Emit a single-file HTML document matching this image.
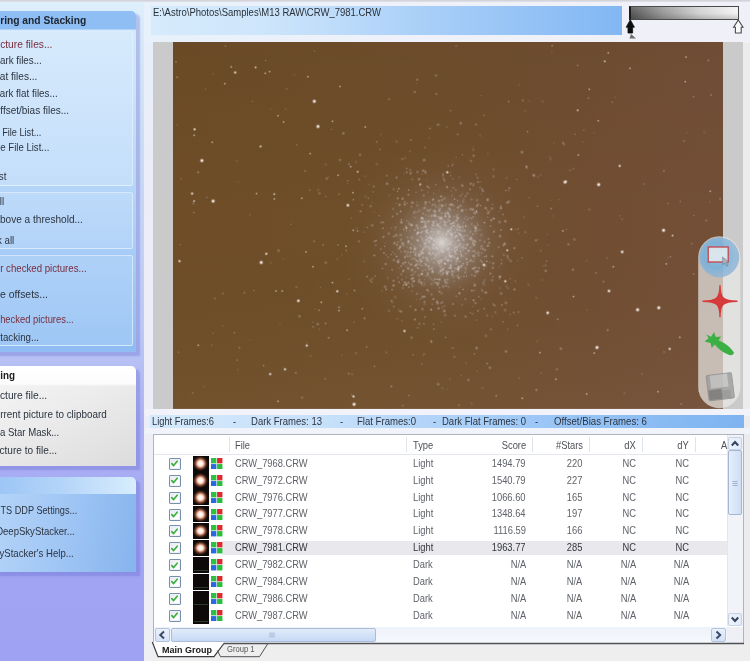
<!DOCTYPE html><html><head><meta charset="utf-8"><title>DeepSkyStacker</title><style>
*{margin:0;padding:0;box-sizing:border-box}
html,body{width:750px;height:661px;overflow:hidden}
body{position:relative;background:#ececee;font-family:"Liberation Sans",sans-serif}
.a{position:absolute}
.t{position:absolute;white-space:nowrap;line-height:14px;height:14px;filter:blur(0.4px)}
#side{left:0;top:0;width:144px;height:661px;background:linear-gradient(180deg,#deeffc 0px,#d8eafb 30px,#cbdcf7 140px,#bcc8f5 330px,#adb2f3 420px,#a1a4f2 560px,#9fa2f2 661px)}
#split{left:144px;top:0;width:9px;height:661px;background:linear-gradient(180deg,#e6f0fb 0,#ebecf7 200px,#eeeef5 661px)}
.box{position:absolute;left:-10px;width:146px;border-radius:5px 5px 0 0;overflow:hidden}
.sh{box-shadow:3.5px 3.5px 1.5px rgba(90,95,200,.3)}
.sub{position:absolute;left:-5px;width:138px;border:1.5px solid rgba(225,240,255,.75);border-radius:2px}
.sky{position:absolute}
.cb{position:absolute;left:168.8px;width:12px;height:12px;border:1.2px solid #7890ae;background:linear-gradient(135deg,#dfe6ea,#fff 70%);border-radius:1px;box-shadow:inset 0 0 0 1px #eef2f6}
.cb svg{position:absolute;left:-.7px;top:-.7px}
.th{position:absolute;left:192.7px;width:16px;height:16.1px;background:#0c0908}
.th.lt::after{content:"";position:absolute;left:.7px;top:.8px;width:14.6px;height:14.6px;border-radius:50%;background:radial-gradient(closest-side,#fff 0,#fff4ec 24%,#f4c8b4 42%,#b07058 58%,#5a3022 76%,rgba(30,14,10,0) 100%);filter:blur(.3px)}
.th.dk::after{content:"";position:absolute;left:1px;top:13.5px;width:14px;height:1px;background:#2c3a2c}
.rgb{position:absolute;left:211.4px;width:11px;height:11px;background:#fff}
.rgb i{position:absolute;width:5.2px;height:5.2px}
.rgb i:nth-child(1){left:0;top:0}.rgb i:nth-child(2){right:0;top:0}.rgb i:nth-child(3){left:0;bottom:0}.rgb i:nth-child(4){right:0;bottom:0}
</style></head><body>
<div class="a" id="side"></div><div class="a" id="split"></div>
<div class="box sh" style="top:11px;height:341px;background:linear-gradient(180deg,#8fbef4 0,#8fbef4 18px,#d3e8fb 19px,#cfe5fb 60px,#b4d5f8 180px,#a3c9f6 260px,#8ebcf3 341px)"></div>
<div class="sub" style="top:30.5px;height:155px;background:linear-gradient(180deg,#d6eafc,#c4defa)"></div>
<div class="sub" style="top:191.5px;height:57px;background:linear-gradient(180deg,#bddaf9,#b2d3f8)"></div>
<div class="sub" style="top:255px;height:91px;background:linear-gradient(180deg,#aed1f8,#9fc7f5)"></div>
<div class="box sh" style="top:366px;height:100px;background:linear-gradient(180deg,#ffffff 0,#fcfcfc 18px,rgba(255,255,255,0) 20px),linear-gradient(155deg,#f6f6f6 0,#ececec 45%,#dcdcdc 100%)"></div>
<div class="box sh" style="top:476.5px;height:95px;background:linear-gradient(100deg,#b6d5f9 0,#a3c8f5 45%,#86b4ee 100%)"></div>
<div class="box" style="top:476.5px;height:17.5px;background:linear-gradient(90deg,#9ac3f5 0,#b4d5f9 50%,#d8edfd 100%)"></div>
<div class="a" style="left:144px;top:0;width:606px;height:42.500px;background:linear-gradient(90deg,#e7f1fb 0,#eef1f9 40%,#f0f0f8 100%)"></div>
<div class="a" style="left:0;top:0;width:750px;height:2px;background:linear-gradient(180deg,#cfcfd4,#e2e3ea)"></div>
<div class="a" style="left:150.7px;top:6px;width:471.7px;height:29px;background:linear-gradient(90deg,#d6ebfc 0,#cde5fb 25%,#a7cef8 60%,#82b7f3 100%)"></div>
<div class="a" style="left:628.5px;top:6.3px;width:110.7px;height:13.3px;border:1px solid #4a4a4a;border-left:2px solid #1c1c1c;border-bottom:1.6px solid #4c4c4c;background:linear-gradient(180deg,rgba(255,255,255,.12) 0,rgba(255,255,255,0) 50%,rgba(0,0,0,.16) 100%),linear-gradient(90deg,#5a5a5a 0,#9a9a9a 30%,#d4d4d4 65%,#f4f4f4 100%)"></div>
<svg class="a" style="left:622px;top:18px" width="128" height="24" viewBox="0 0 128 24"><g filter="url(#sb2)"><path d="M8.3 1.800 L12.400 9.200 L10.600 9.200 L10.600 15 L6 15 L6 9.200 L4.200 9.200 Z" fill="#0c0c0c" stroke="#0c0c0c" stroke-width="0.800"/><path d="M9 16 L14 20.500 L7.500 20.500Z" fill="#555" opacity=".85"/><path d="M116.300 2 L121 9.200 L119.200 9.200 L119.200 15 L113.400 15 L113.400 9.200 L111.600 9.200 Z" fill="#fafafa" stroke="#4a4a4a" stroke-width="1.100"/></g><defs><filter id="sb2"><feGaussianBlur stdDeviation=".4"/></filter></defs></svg>
<div class="a" style="left:153px;top:41.7px;width:590px;height:366.9px;background:#cacaca"></div>
<svg class="sky" width="550.2" height="366.9" viewBox="0 0 550.2 366.9" style="left:172.7px;top:41.7px">
<defs>
<linearGradient id="bg" x1="0" y1="0" x2="1" y2="0"><stop offset="0" stop-color="#6e4d27"/><stop offset="0.45" stop-color="#6f4e2b"/><stop offset="0.75" stop-color="#714e32"/><stop offset="1" stop-color="#734f37"/></linearGradient>
<linearGradient id="bg2" x1="0" y1="0" x2="0" y2="1"><stop offset="0" stop-color="#000" stop-opacity=".035"/><stop offset="0.5" stop-color="#000" stop-opacity="0"/><stop offset="1" stop-color="#fff" stop-opacity=".03"/></linearGradient>
<radialGradient id="gl"><stop offset="0" stop-color="#d6d4d6" stop-opacity="0.85"/><stop offset="0.1" stop-color="#cccbd0" stop-opacity="0.66"/><stop offset="0.2" stop-color="#c4c4cc" stop-opacity="0.5"/><stop offset="0.35" stop-color="#bcbcc6" stop-opacity="0.26"/><stop offset="0.5" stop-color="#b6b4bc" stop-opacity="0.11"/><stop offset="0.7" stop-color="#b0a8a8" stop-opacity="0.035"/><stop offset="1" stop-color="#a89888" stop-opacity="0"/></radialGradient>
<radialGradient id="st"><stop offset="0" stop-color="#fff" stop-opacity="1"/><stop offset="0.35" stop-color="#f0e8e2" stop-opacity="0.75"/><stop offset="0.7" stop-color="#d8c8b8" stop-opacity="0.25"/><stop offset="1" stop-color="#c8b8a8" stop-opacity="0"/></radialGradient>
<radialGradient id="co"><stop offset="0" stop-color="#ece8e4" stop-opacity="0.75"/><stop offset="0.3" stop-color="#e0dad4" stop-opacity="0.45"/><stop offset="0.65" stop-color="#d0c8c0" stop-opacity="0.15"/><stop offset="1" stop-color="#c8c0b8" stop-opacity="0"/></radialGradient>
<filter id="blr" x="0" y="0" width="100%" height="100%"><feGaussianBlur stdDeviation="0.7"/></filter>
<radialGradient id="sf"><stop offset="0" stop-color="#e6e0e0" stop-opacity="0.9"/><stop offset="0.5" stop-color="#d6d0d0" stop-opacity="0.5"/><stop offset="1" stop-color="#c6c0c0" stop-opacity="0"/></radialGradient>
</defs>
<rect width="550.2" height="366.9" fill="url(#bg)"/><rect width="550.2" height="366.9" fill="url(#bg2)"/>
<circle cx="268.8" cy="200.6" r="100" fill="url(#gl)"/>
<circle cx="268.8" cy="200.6" r="16" fill="url(#co)" opacity=".7"/>
<g filter="url(#blr)">
<circle cx="285.9" cy="224.4" r="1.9" fill="url(#sf)" opacity="0.18"/>
<circle cx="240.1" cy="232.9" r="1.3" fill="url(#sf)" opacity="0.33"/>
<circle cx="258.7" cy="205.1" r="1.3" fill="url(#sf)" opacity="0.19"/>
<circle cx="285.2" cy="169.3" r="1.3" fill="url(#sf)" opacity="0.24"/>
<circle cx="317.4" cy="184.0" r="1.8" fill="url(#sf)" opacity="0.29"/>
<circle cx="276.3" cy="191.3" r="1.5" fill="url(#sf)" opacity="0.21"/>
<circle cx="262.5" cy="216.9" r="2.1" fill="url(#sf)" opacity="0.22"/>
<circle cx="238.6" cy="164.6" r="1.6" fill="url(#sf)" opacity="0.35"/>
<circle cx="281.3" cy="205.5" r="1.4" fill="url(#sf)" opacity="0.39"/>
<circle cx="254.9" cy="233.3" r="1.8" fill="url(#sf)" opacity="0.31"/>
<circle cx="276.5" cy="173.8" r="2.0" fill="url(#sf)" opacity="0.24"/>
<circle cx="223.0" cy="193.3" r="2.2" fill="url(#sf)" opacity="0.41"/>
<circle cx="295.8" cy="197.2" r="1.3" fill="url(#sf)" opacity="0.30"/>
<circle cx="308.5" cy="256.7" r="1.7" fill="url(#sf)" opacity="0.17"/>
<circle cx="273.9" cy="145.0" r="1.8" fill="url(#sf)" opacity="0.46"/>
<circle cx="259.1" cy="173.6" r="1.9" fill="url(#sf)" opacity="0.36"/>
<circle cx="288.8" cy="169.0" r="2.2" fill="url(#sf)" opacity="0.32"/>
<circle cx="320.2" cy="221.2" r="2.0" fill="url(#sf)" opacity="0.38"/>
<circle cx="250.9" cy="281.6" r="1.6" fill="url(#sf)" opacity="0.33"/>
<circle cx="259.9" cy="202.8" r="1.4" fill="url(#sf)" opacity="0.20"/>
<circle cx="270.3" cy="187.6" r="1.3" fill="url(#sf)" opacity="0.24"/>
<circle cx="291.8" cy="176.6" r="1.3" fill="url(#sf)" opacity="0.31"/>
<circle cx="301.7" cy="171.0" r="2.1" fill="url(#sf)" opacity="0.45"/>
<circle cx="245.8" cy="214.2" r="1.6" fill="url(#sf)" opacity="0.46"/>
<circle cx="277.5" cy="218.0" r="1.5" fill="url(#sf)" opacity="0.24"/>
<circle cx="235.4" cy="179.7" r="1.5" fill="url(#sf)" opacity="0.16"/>
<circle cx="245.0" cy="226.2" r="1.8" fill="url(#sf)" opacity="0.48"/>
<circle cx="210.5" cy="194.9" r="1.9" fill="url(#sf)" opacity="0.39"/>
<circle cx="279.0" cy="193.1" r="2.1" fill="url(#sf)" opacity="0.46"/>
<circle cx="208.8" cy="248.7" r="1.6" fill="url(#sf)" opacity="0.17"/>
<circle cx="316.9" cy="220.4" r="1.3" fill="url(#sf)" opacity="0.23"/>
<circle cx="258.0" cy="217.6" r="1.3" fill="url(#sf)" opacity="0.16"/>
<circle cx="284.5" cy="212.2" r="1.6" fill="url(#sf)" opacity="0.17"/>
<circle cx="192.4" cy="134.1" r="1.4" fill="url(#sf)" opacity="0.21"/>
<circle cx="248.7" cy="223.7" r="1.3" fill="url(#sf)" opacity="0.45"/>
<circle cx="230.9" cy="204.5" r="1.3" fill="url(#sf)" opacity="0.19"/>
<circle cx="266.0" cy="230.8" r="2.1" fill="url(#sf)" opacity="0.21"/>
<circle cx="277.6" cy="197.8" r="1.8" fill="url(#sf)" opacity="0.21"/>
<circle cx="311.9" cy="208.0" r="1.8" fill="url(#sf)" opacity="0.49"/>
<circle cx="236.8" cy="109.4" r="1.5" fill="url(#sf)" opacity="0.24"/>
<circle cx="271.6" cy="180.3" r="1.8" fill="url(#sf)" opacity="0.42"/>
<circle cx="273.8" cy="229.8" r="2.1" fill="url(#sf)" opacity="0.49"/>
<circle cx="300.7" cy="113.7" r="2.1" fill="url(#sf)" opacity="0.35"/>
<circle cx="245.1" cy="198.0" r="1.6" fill="url(#sf)" opacity="0.17"/>
<circle cx="267.0" cy="210.3" r="1.5" fill="url(#sf)" opacity="0.40"/>
<circle cx="302.7" cy="186.4" r="2.3" fill="url(#sf)" opacity="0.48"/>
<circle cx="274.6" cy="231.7" r="1.4" fill="url(#sf)" opacity="0.23"/>
<circle cx="252.7" cy="184.7" r="2.2" fill="url(#sf)" opacity="0.45"/>
<circle cx="246.5" cy="168.6" r="2.1" fill="url(#sf)" opacity="0.19"/>
<circle cx="315.1" cy="171.1" r="2.1" fill="url(#sf)" opacity="0.42"/>
<circle cx="285.7" cy="235.6" r="2.1" fill="url(#sf)" opacity="0.27"/>
<circle cx="345.2" cy="186.9" r="1.6" fill="url(#sf)" opacity="0.25"/>
<circle cx="243.4" cy="41.7" r="1.4" fill="url(#sf)" opacity="0.17"/>
<circle cx="284.9" cy="189.6" r="2.1" fill="url(#sf)" opacity="0.21"/>
<circle cx="352.4" cy="190.2" r="1.9" fill="url(#sf)" opacity="0.24"/>
<circle cx="298.9" cy="233.0" r="1.2" fill="url(#sf)" opacity="0.49"/>
<circle cx="215.8" cy="191.7" r="2.2" fill="url(#sf)" opacity="0.31"/>
<circle cx="314.9" cy="111.7" r="1.4" fill="url(#sf)" opacity="0.21"/>
<circle cx="270.4" cy="228.1" r="1.8" fill="url(#sf)" opacity="0.25"/>
<circle cx="292.6" cy="226.3" r="2.2" fill="url(#sf)" opacity="0.28"/>
<circle cx="236.3" cy="181.8" r="2.2" fill="url(#sf)" opacity="0.30"/>
<circle cx="141.1" cy="199.3" r="1.8" fill="url(#sf)" opacity="0.29"/>
<circle cx="260.9" cy="203.7" r="1.4" fill="url(#sf)" opacity="0.16"/>
<circle cx="305.0" cy="268.8" r="1.7" fill="url(#sf)" opacity="0.35"/>
<circle cx="248.2" cy="240.4" r="1.8" fill="url(#sf)" opacity="0.35"/>
<circle cx="326.9" cy="246.3" r="1.8" fill="url(#sf)" opacity="0.21"/>
<circle cx="272.5" cy="174.2" r="1.8" fill="url(#sf)" opacity="0.35"/>
<circle cx="327.8" cy="164.4" r="1.7" fill="url(#sf)" opacity="0.37"/>
<circle cx="228.1" cy="197.5" r="2.0" fill="url(#sf)" opacity="0.31"/>
<circle cx="226.2" cy="206.5" r="2.2" fill="url(#sf)" opacity="0.40"/>
<circle cx="364.4" cy="164.2" r="1.5" fill="url(#sf)" opacity="0.30"/>
<circle cx="352.2" cy="69.2" r="1.4" fill="url(#sf)" opacity="0.17"/>
<circle cx="301.5" cy="216.6" r="1.5" fill="url(#sf)" opacity="0.18"/>
<circle cx="280.6" cy="145.9" r="2.2" fill="url(#sf)" opacity="0.21"/>
<circle cx="235.6" cy="148.1" r="1.4" fill="url(#sf)" opacity="0.46"/>
<circle cx="291.2" cy="193.7" r="1.6" fill="url(#sf)" opacity="0.33"/>
<circle cx="314.2" cy="273.6" r="1.7" fill="url(#sf)" opacity="0.29"/>
<circle cx="278.9" cy="229.0" r="1.6" fill="url(#sf)" opacity="0.41"/>
<circle cx="260.6" cy="197.7" r="1.7" fill="url(#sf)" opacity="0.17"/>
<circle cx="247.6" cy="179.7" r="1.8" fill="url(#sf)" opacity="0.18"/>
<circle cx="342.4" cy="187.4" r="1.3" fill="url(#sf)" opacity="0.21"/>
<circle cx="270.8" cy="189.5" r="1.5" fill="url(#sf)" opacity="0.20"/>
<circle cx="298.7" cy="182.0" r="2.1" fill="url(#sf)" opacity="0.25"/>
<circle cx="285.8" cy="191.2" r="1.8" fill="url(#sf)" opacity="0.40"/>
<circle cx="283.3" cy="206.1" r="2.0" fill="url(#sf)" opacity="0.30"/>
<circle cx="282.0" cy="195.2" r="1.9" fill="url(#sf)" opacity="0.43"/>
<circle cx="278.1" cy="188.8" r="1.3" fill="url(#sf)" opacity="0.45"/>
<circle cx="249.0" cy="232.1" r="1.8" fill="url(#sf)" opacity="0.48"/>
<circle cx="286.8" cy="219.6" r="1.8" fill="url(#sf)" opacity="0.24"/>
<circle cx="277.7" cy="214.9" r="1.3" fill="url(#sf)" opacity="0.23"/>
<circle cx="259.1" cy="227.5" r="2.0" fill="url(#sf)" opacity="0.26"/>
<circle cx="286.5" cy="237.0" r="1.6" fill="url(#sf)" opacity="0.17"/>
<circle cx="293.9" cy="203.0" r="2.0" fill="url(#sf)" opacity="0.35"/>
<circle cx="247.3" cy="204.0" r="2.2" fill="url(#sf)" opacity="0.20"/>
<circle cx="194.0" cy="234.6" r="1.7" fill="url(#sf)" opacity="0.38"/>
<circle cx="235.5" cy="199.2" r="2.0" fill="url(#sf)" opacity="0.49"/>
<circle cx="283.8" cy="174.2" r="2.0" fill="url(#sf)" opacity="0.38"/>
<circle cx="249.2" cy="228.5" r="1.3" fill="url(#sf)" opacity="0.20"/>
<circle cx="268.0" cy="186.5" r="1.5" fill="url(#sf)" opacity="0.22"/>
<circle cx="277.0" cy="187.9" r="2.2" fill="url(#sf)" opacity="0.39"/>
<circle cx="270.1" cy="227.5" r="1.5" fill="url(#sf)" opacity="0.32"/>
<circle cx="250.0" cy="207.2" r="1.5" fill="url(#sf)" opacity="0.49"/>
<circle cx="270.3" cy="244.6" r="2.3" fill="url(#sf)" opacity="0.27"/>
<circle cx="300.0" cy="200.8" r="1.6" fill="url(#sf)" opacity="0.32"/>
<circle cx="281.1" cy="239.3" r="1.8" fill="url(#sf)" opacity="0.16"/>
<circle cx="290.7" cy="214.5" r="1.6" fill="url(#sf)" opacity="0.17"/>
<circle cx="265.8" cy="209.2" r="1.5" fill="url(#sf)" opacity="0.36"/>
<circle cx="268.9" cy="158.0" r="1.9" fill="url(#sf)" opacity="0.40"/>
<circle cx="189.3" cy="266.8" r="1.6" fill="url(#sf)" opacity="0.42"/>
<circle cx="265.7" cy="181.4" r="1.9" fill="url(#sf)" opacity="0.17"/>
<circle cx="336.4" cy="146.1" r="1.9" fill="url(#sf)" opacity="0.35"/>
<circle cx="320.3" cy="262.3" r="1.8" fill="url(#sf)" opacity="0.28"/>
<circle cx="298.0" cy="119.0" r="2.1" fill="url(#sf)" opacity="0.30"/>
<circle cx="223.5" cy="99.6" r="2.0" fill="url(#sf)" opacity="0.20"/>
<circle cx="275.7" cy="208.2" r="1.6" fill="url(#sf)" opacity="0.20"/>
<circle cx="187.6" cy="169.3" r="1.9" fill="url(#sf)" opacity="0.32"/>
<circle cx="211.6" cy="204.5" r="1.2" fill="url(#sf)" opacity="0.43"/>
<circle cx="201.7" cy="199.3" r="1.8" fill="url(#sf)" opacity="0.38"/>
<circle cx="267.7" cy="186.9" r="1.5" fill="url(#sf)" opacity="0.19"/>
<circle cx="265.4" cy="174.8" r="1.4" fill="url(#sf)" opacity="0.41"/>
<circle cx="239.2" cy="227.5" r="1.7" fill="url(#sf)" opacity="0.39"/>
<circle cx="216.5" cy="153.3" r="1.9" fill="url(#sf)" opacity="0.16"/>
<circle cx="268.3" cy="219.9" r="2.0" fill="url(#sf)" opacity="0.26"/>
<circle cx="314.4" cy="204.2" r="1.3" fill="url(#sf)" opacity="0.25"/>
<circle cx="248.8" cy="148.0" r="1.9" fill="url(#sf)" opacity="0.26"/>
<circle cx="228.1" cy="209.8" r="1.7" fill="url(#sf)" opacity="0.20"/>
<circle cx="303.6" cy="306.1" r="2.3" fill="url(#sf)" opacity="0.41"/>
<circle cx="260.7" cy="202.7" r="2.1" fill="url(#sf)" opacity="0.49"/>
<circle cx="264.5" cy="237.3" r="1.4" fill="url(#sf)" opacity="0.48"/>
<circle cx="248.8" cy="189.4" r="1.4" fill="url(#sf)" opacity="0.34"/>
<circle cx="383.9" cy="327.3" r="2.1" fill="url(#sf)" opacity="0.28"/>
<circle cx="237.8" cy="97.8" r="1.5" fill="url(#sf)" opacity="0.40"/>
<circle cx="307.8" cy="206.7" r="1.2" fill="url(#sf)" opacity="0.33"/>
<circle cx="256.9" cy="235.7" r="1.4" fill="url(#sf)" opacity="0.28"/>
<circle cx="284.3" cy="176.3" r="1.2" fill="url(#sf)" opacity="0.42"/>
<circle cx="332.9" cy="260.9" r="2.2" fill="url(#sf)" opacity="0.34"/>
<circle cx="240.1" cy="312.9" r="1.6" fill="url(#sf)" opacity="0.25"/>
<circle cx="238.3" cy="237.2" r="1.7" fill="url(#sf)" opacity="0.25"/>
<circle cx="278.5" cy="207.8" r="2.1" fill="url(#sf)" opacity="0.26"/>
<circle cx="269.4" cy="346.1" r="1.5" fill="url(#sf)" opacity="0.28"/>
<circle cx="253.6" cy="216.2" r="2.3" fill="url(#sf)" opacity="0.46"/>
<circle cx="214.1" cy="141.7" r="2.2" fill="url(#sf)" opacity="0.41"/>
<circle cx="260.4" cy="157.2" r="1.3" fill="url(#sf)" opacity="0.41"/>
<circle cx="269.4" cy="163.6" r="1.9" fill="url(#sf)" opacity="0.26"/>
<circle cx="279.7" cy="195.2" r="1.3" fill="url(#sf)" opacity="0.32"/>
<circle cx="259.8" cy="229.7" r="2.0" fill="url(#sf)" opacity="0.49"/>
<circle cx="254.5" cy="179.2" r="1.5" fill="url(#sf)" opacity="0.35"/>
<circle cx="285.4" cy="229.6" r="1.4" fill="url(#sf)" opacity="0.23"/>
<circle cx="150.0" cy="202.8" r="1.4" fill="url(#sf)" opacity="0.40"/>
<circle cx="292.4" cy="229.0" r="1.4" fill="url(#sf)" opacity="0.19"/>
<circle cx="294.3" cy="217.0" r="1.5" fill="url(#sf)" opacity="0.25"/>
<circle cx="303.7" cy="170.7" r="2.0" fill="url(#sf)" opacity="0.30"/>
<circle cx="234.6" cy="195.4" r="1.6" fill="url(#sf)" opacity="0.27"/>
<circle cx="266.5" cy="213.8" r="2.3" fill="url(#sf)" opacity="0.20"/>
<circle cx="240.9" cy="171.0" r="2.1" fill="url(#sf)" opacity="0.23"/>
<circle cx="269.1" cy="226.9" r="1.6" fill="url(#sf)" opacity="0.31"/>
<circle cx="369.6" cy="59.4" r="2.2" fill="url(#sf)" opacity="0.14"/>
<circle cx="266.2" cy="190.5" r="2.2" fill="url(#sf)" opacity="0.32"/>
<circle cx="316.3" cy="200.7" r="1.6" fill="url(#sf)" opacity="0.48"/>
<circle cx="320.5" cy="134.4" r="2.3" fill="url(#sf)" opacity="0.21"/>
<circle cx="278.3" cy="214.5" r="1.8" fill="url(#sf)" opacity="0.39"/>
<circle cx="241.8" cy="49.9" r="1.9" fill="url(#sf)" opacity="0.36"/>
<circle cx="233.3" cy="188.7" r="1.2" fill="url(#sf)" opacity="0.43"/>
<circle cx="290.0" cy="188.9" r="1.9" fill="url(#sf)" opacity="0.26"/>
<circle cx="268.6" cy="218.7" r="1.9" fill="url(#sf)" opacity="0.40"/>
<circle cx="284.2" cy="207.9" r="1.8" fill="url(#sf)" opacity="0.36"/>
<circle cx="274.3" cy="233.2" r="1.9" fill="url(#sf)" opacity="0.16"/>
<circle cx="241.6" cy="207.5" r="2.3" fill="url(#sf)" opacity="0.38"/>
<circle cx="164.3" cy="217.0" r="1.5" fill="url(#sf)" opacity="0.21"/>
<circle cx="247.5" cy="257.2" r="1.2" fill="url(#sf)" opacity="0.33"/>
<circle cx="219.2" cy="227.8" r="1.5" fill="url(#sf)" opacity="0.39"/>
<circle cx="288.3" cy="333.5" r="1.2" fill="url(#sf)" opacity="0.23"/>
<circle cx="254.4" cy="168.6" r="1.4" fill="url(#sf)" opacity="0.43"/>
<circle cx="203.2" cy="198.6" r="1.4" fill="url(#sf)" opacity="0.49"/>
<circle cx="281.0" cy="174.7" r="1.5" fill="url(#sf)" opacity="0.24"/>
<circle cx="249.5" cy="267.1" r="2.2" fill="url(#sf)" opacity="0.33"/>
<circle cx="272.4" cy="221.9" r="1.7" fill="url(#sf)" opacity="0.39"/>
<circle cx="368.2" cy="331.1" r="1.6" fill="url(#sf)" opacity="0.20"/>
<circle cx="286.8" cy="206.7" r="1.3" fill="url(#sf)" opacity="0.29"/>
<circle cx="353.5" cy="124.6" r="2.0" fill="url(#sf)" opacity="0.42"/>
<circle cx="201.5" cy="324.4" r="1.4" fill="url(#sf)" opacity="0.41"/>
<circle cx="334.3" cy="213.9" r="1.9" fill="url(#sf)" opacity="0.29"/>
<circle cx="253.0" cy="228.7" r="1.4" fill="url(#sf)" opacity="0.16"/>
<circle cx="252.8" cy="222.1" r="2.3" fill="url(#sf)" opacity="0.20"/>
<circle cx="254.7" cy="218.4" r="2.1" fill="url(#sf)" opacity="0.44"/>
<circle cx="302.9" cy="211.5" r="1.7" fill="url(#sf)" opacity="0.29"/>
<circle cx="314.1" cy="321.6" r="1.6" fill="url(#sf)" opacity="0.40"/>
<circle cx="260.2" cy="206.0" r="2.1" fill="url(#sf)" opacity="0.42"/>
<circle cx="279.9" cy="203.1" r="1.3" fill="url(#sf)" opacity="0.47"/>
<circle cx="268.4" cy="175.1" r="2.2" fill="url(#sf)" opacity="0.28"/>
<circle cx="294.3" cy="193.7" r="1.9" fill="url(#sf)" opacity="0.25"/>
<circle cx="243.6" cy="257.4" r="1.5" fill="url(#sf)" opacity="0.16"/>
<circle cx="328.0" cy="166.3" r="1.9" fill="url(#sf)" opacity="0.48"/>
<circle cx="269.7" cy="209.9" r="1.7" fill="url(#sf)" opacity="0.49"/>
<circle cx="137.6" cy="314.0" r="1.5" fill="url(#sf)" opacity="0.26"/>
<circle cx="304.8" cy="183.1" r="1.4" fill="url(#sf)" opacity="0.43"/>
<circle cx="297.7" cy="141.8" r="2.1" fill="url(#sf)" opacity="0.37"/>
<circle cx="256.3" cy="227.3" r="1.6" fill="url(#sf)" opacity="0.43"/>
<circle cx="273.6" cy="214.5" r="2.0" fill="url(#sf)" opacity="0.24"/>
<circle cx="282.1" cy="203.5" r="1.8" fill="url(#sf)" opacity="0.27"/>
<circle cx="374.1" cy="192.5" r="1.5" fill="url(#sf)" opacity="0.16"/>
<circle cx="252.8" cy="200.8" r="2.0" fill="url(#sf)" opacity="0.31"/>
<circle cx="247.8" cy="212.7" r="1.9" fill="url(#sf)" opacity="0.39"/>
<circle cx="307.2" cy="145.6" r="1.9" fill="url(#sf)" opacity="0.20"/>
<circle cx="244.7" cy="285.8" r="1.8" fill="url(#sf)" opacity="0.24"/>
<circle cx="289.3" cy="262.7" r="1.5" fill="url(#sf)" opacity="0.24"/>
<circle cx="283.5" cy="187.5" r="1.8" fill="url(#sf)" opacity="0.27"/>
<circle cx="302.3" cy="199.0" r="1.8" fill="url(#sf)" opacity="0.24"/>
<circle cx="223.5" cy="135.4" r="2.3" fill="url(#sf)" opacity="0.17"/>
<circle cx="285.1" cy="165.5" r="2.1" fill="url(#sf)" opacity="0.47"/>
<circle cx="265.7" cy="211.5" r="1.3" fill="url(#sf)" opacity="0.22"/>
<circle cx="311.5" cy="180.6" r="1.6" fill="url(#sf)" opacity="0.45"/>
<circle cx="266.5" cy="237.4" r="2.1" fill="url(#sf)" opacity="0.48"/>
<circle cx="255.1" cy="191.1" r="1.9" fill="url(#sf)" opacity="0.23"/>
<circle cx="288.9" cy="225.3" r="1.4" fill="url(#sf)" opacity="0.25"/>
<circle cx="240.6" cy="161.0" r="1.4" fill="url(#sf)" opacity="0.16"/>
<circle cx="256.0" cy="174.1" r="1.4" fill="url(#sf)" opacity="0.27"/>
<circle cx="275.1" cy="179.0" r="1.8" fill="url(#sf)" opacity="0.18"/>
<circle cx="255.9" cy="210.6" r="1.8" fill="url(#sf)" opacity="0.38"/>
<circle cx="276.9" cy="214.0" r="2.0" fill="url(#sf)" opacity="0.30"/>
<circle cx="259.2" cy="225.9" r="2.2" fill="url(#sf)" opacity="0.27"/>
<circle cx="240.3" cy="236.3" r="1.7" fill="url(#sf)" opacity="0.45"/>
<circle cx="279.1" cy="230.5" r="2.0" fill="url(#sf)" opacity="0.23"/>
<circle cx="273.4" cy="197.3" r="1.7" fill="url(#sf)" opacity="0.44"/>
<circle cx="294.1" cy="177.7" r="1.7" fill="url(#sf)" opacity="0.22"/>
<circle cx="261.4" cy="198.1" r="1.9" fill="url(#sf)" opacity="0.47"/>
<circle cx="257.7" cy="189.9" r="1.6" fill="url(#sf)" opacity="0.33"/>
<circle cx="264.8" cy="219.4" r="1.8" fill="url(#sf)" opacity="0.47"/>
<circle cx="252.0" cy="201.6" r="2.1" fill="url(#sf)" opacity="0.49"/>
<circle cx="284.3" cy="216.5" r="2.2" fill="url(#sf)" opacity="0.49"/>
<circle cx="305.8" cy="213.5" r="2.2" fill="url(#sf)" opacity="0.29"/>
<circle cx="183.2" cy="119.9" r="2.1" fill="url(#sf)" opacity="0.18"/>
<circle cx="281.8" cy="273.7" r="1.6" fill="url(#sf)" opacity="0.38"/>
<circle cx="303.6" cy="278.2" r="1.4" fill="url(#sf)" opacity="0.25"/>
<circle cx="237.7" cy="228.5" r="1.3" fill="url(#sf)" opacity="0.24"/>
<circle cx="319.4" cy="162.5" r="1.2" fill="url(#sf)" opacity="0.35"/>
<circle cx="335.6" cy="216.9" r="2.1" fill="url(#sf)" opacity="0.20"/>
<circle cx="222.6" cy="185.6" r="1.9" fill="url(#sf)" opacity="0.26"/>
<circle cx="238.4" cy="183.2" r="1.7" fill="url(#sf)" opacity="0.38"/>
<circle cx="234.8" cy="214.5" r="1.2" fill="url(#sf)" opacity="0.37"/>
<circle cx="272.5" cy="240.1" r="2.0" fill="url(#sf)" opacity="0.43"/>
<circle cx="284.9" cy="234.5" r="1.7" fill="url(#sf)" opacity="0.20"/>
<circle cx="252.4" cy="208.3" r="1.3" fill="url(#sf)" opacity="0.31"/>
<circle cx="308.7" cy="211.0" r="1.9" fill="url(#sf)" opacity="0.19"/>
<circle cx="280.0" cy="136.9" r="1.8" fill="url(#sf)" opacity="0.18"/>
<circle cx="239.5" cy="228.9" r="2.2" fill="url(#sf)" opacity="0.21"/>
<circle cx="363.0" cy="198.3" r="2.0" fill="url(#sf)" opacity="0.37"/>
<circle cx="290.6" cy="198.1" r="1.7" fill="url(#sf)" opacity="0.49"/>
<circle cx="333.0" cy="309.4" r="2.1" fill="url(#sf)" opacity="0.40"/>
<circle cx="260.7" cy="211.6" r="2.0" fill="url(#sf)" opacity="0.21"/>
<circle cx="251.2" cy="312.0" r="2.1" fill="url(#sf)" opacity="0.18"/>
<circle cx="304.4" cy="181.0" r="1.4" fill="url(#sf)" opacity="0.25"/>
<circle cx="251.6" cy="237.7" r="1.2" fill="url(#sf)" opacity="0.22"/>
<circle cx="287.3" cy="192.8" r="1.9" fill="url(#sf)" opacity="0.46"/>
<circle cx="273.3" cy="180.5" r="1.3" fill="url(#sf)" opacity="0.34"/>
<circle cx="235.5" cy="240.9" r="2.2" fill="url(#sf)" opacity="0.35"/>
<circle cx="303.5" cy="169.1" r="1.3" fill="url(#sf)" opacity="0.50"/>
<circle cx="228.2" cy="232.4" r="2.1" fill="url(#sf)" opacity="0.25"/>
<circle cx="239.0" cy="236.5" r="2.0" fill="url(#sf)" opacity="0.31"/>
<circle cx="268.0" cy="179.6" r="1.3" fill="url(#sf)" opacity="0.44"/>
<circle cx="252.5" cy="181.1" r="2.3" fill="url(#sf)" opacity="0.36"/>
<circle cx="247.6" cy="251.7" r="1.2" fill="url(#sf)" opacity="0.17"/>
<circle cx="254.3" cy="187.7" r="1.7" fill="url(#sf)" opacity="0.33"/>
<circle cx="344.6" cy="283.4" r="1.4" fill="url(#sf)" opacity="0.32"/>
<circle cx="277.9" cy="200.7" r="1.6" fill="url(#sf)" opacity="0.20"/>
<circle cx="273.8" cy="231.4" r="1.8" fill="url(#sf)" opacity="0.36"/>
<circle cx="252.7" cy="184.7" r="1.7" fill="url(#sf)" opacity="0.21"/>
<circle cx="274.7" cy="347.2" r="1.4" fill="url(#sf)" opacity="0.16"/>
<circle cx="305.0" cy="162.6" r="2.1" fill="url(#sf)" opacity="0.30"/>
<circle cx="294.7" cy="202.5" r="1.9" fill="url(#sf)" opacity="0.35"/>
<circle cx="250.0" cy="176.2" r="1.7" fill="url(#sf)" opacity="0.48"/>
<circle cx="269.4" cy="265.3" r="2.2" fill="url(#sf)" opacity="0.17"/>
<circle cx="233.2" cy="224.5" r="1.5" fill="url(#sf)" opacity="0.18"/>
<circle cx="341.4" cy="206.2" r="1.8" fill="url(#sf)" opacity="0.41"/>
<circle cx="274.7" cy="218.6" r="1.9" fill="url(#sf)" opacity="0.33"/>
<circle cx="289.3" cy="151.9" r="1.4" fill="url(#sf)" opacity="0.27"/>
<circle cx="295.5" cy="209.0" r="2.2" fill="url(#sf)" opacity="0.43"/>
<circle cx="330.7" cy="203.1" r="2.1" fill="url(#sf)" opacity="0.41"/>
<circle cx="266.8" cy="162.6" r="1.7" fill="url(#sf)" opacity="0.24"/>
<circle cx="270.6" cy="217.1" r="1.2" fill="url(#sf)" opacity="0.27"/>
<circle cx="246.0" cy="137.2" r="2.1" fill="url(#sf)" opacity="0.40"/>
<circle cx="244.2" cy="192.0" r="1.7" fill="url(#sf)" opacity="0.43"/>
<circle cx="264.8" cy="242.6" r="1.9" fill="url(#sf)" opacity="0.49"/>
<circle cx="285.8" cy="184.7" r="1.2" fill="url(#sf)" opacity="0.25"/>
<circle cx="267.9" cy="176.2" r="2.2" fill="url(#sf)" opacity="0.41"/>
<circle cx="290.3" cy="180.5" r="1.6" fill="url(#sf)" opacity="0.24"/>
<circle cx="187.1" cy="112.8" r="2.0" fill="url(#sf)" opacity="0.33"/>
<circle cx="289.3" cy="168.2" r="2.0" fill="url(#sf)" opacity="0.45"/>
<circle cx="263.1" cy="164.9" r="1.8" fill="url(#sf)" opacity="0.26"/>
<circle cx="252.3" cy="184.6" r="1.3" fill="url(#sf)" opacity="0.47"/>
<circle cx="287.6" cy="203.8" r="1.3" fill="url(#sf)" opacity="0.48"/>
<circle cx="288.0" cy="224.3" r="1.2" fill="url(#sf)" opacity="0.17"/>
<circle cx="229.6" cy="156.7" r="2.0" fill="url(#sf)" opacity="0.41"/>
<circle cx="257.3" cy="193.2" r="1.6" fill="url(#sf)" opacity="0.44"/>
<circle cx="332.6" cy="148.6" r="1.3" fill="url(#sf)" opacity="0.39"/>
<circle cx="386.3" cy="157.7" r="1.3" fill="url(#sf)" opacity="0.20"/>
<circle cx="285.5" cy="204.3" r="2.1" fill="url(#sf)" opacity="0.44"/>
<circle cx="292.4" cy="154.2" r="1.9" fill="url(#sf)" opacity="0.26"/>
<circle cx="282.1" cy="210.0" r="2.0" fill="url(#sf)" opacity="0.23"/>
<circle cx="243.0" cy="214.0" r="1.2" fill="url(#sf)" opacity="0.25"/>
<circle cx="263.0" cy="174.3" r="1.6" fill="url(#sf)" opacity="0.27"/>
<circle cx="293.0" cy="167.9" r="1.9" fill="url(#sf)" opacity="0.17"/>
<circle cx="236.9" cy="214.0" r="2.1" fill="url(#sf)" opacity="0.28"/>
<circle cx="210.0" cy="186.3" r="1.4" fill="url(#sf)" opacity="0.45"/>
<circle cx="275.4" cy="186.5" r="1.4" fill="url(#sf)" opacity="0.16"/>
<circle cx="270.5" cy="178.2" r="2.3" fill="url(#sf)" opacity="0.16"/>
<circle cx="229.1" cy="202.7" r="2.1" fill="url(#sf)" opacity="0.22"/>
<circle cx="245.8" cy="233.4" r="2.1" fill="url(#sf)" opacity="0.25"/>
<circle cx="235.9" cy="353.5" r="1.4" fill="url(#sf)" opacity="0.34"/>
<circle cx="299.9" cy="226.3" r="1.9" fill="url(#sf)" opacity="0.19"/>
<circle cx="244.5" cy="130.0" r="2.1" fill="url(#sf)" opacity="0.32"/>
<circle cx="243.5" cy="218.7" r="1.6" fill="url(#sf)" opacity="0.46"/>
<circle cx="280.5" cy="190.8" r="1.2" fill="url(#sf)" opacity="0.23"/>
<circle cx="289.9" cy="185.5" r="1.8" fill="url(#sf)" opacity="0.29"/>
<circle cx="279.7" cy="305.9" r="1.7" fill="url(#sf)" opacity="0.29"/>
<circle cx="270.1" cy="132.4" r="1.9" fill="url(#sf)" opacity="0.28"/>
<circle cx="285.3" cy="225.0" r="2.1" fill="url(#sf)" opacity="0.39"/>
<circle cx="300.8" cy="258.4" r="1.7" fill="url(#sf)" opacity="0.42"/>
<circle cx="301.7" cy="233.9" r="1.7" fill="url(#sf)" opacity="0.46"/>
<circle cx="277.6" cy="223.4" r="1.5" fill="url(#sf)" opacity="0.40"/>
<circle cx="319.3" cy="274.5" r="1.4" fill="url(#sf)" opacity="0.21"/>
<circle cx="239.6" cy="196.5" r="1.4" fill="url(#sf)" opacity="0.27"/>
<circle cx="290.3" cy="197.2" r="2.0" fill="url(#sf)" opacity="0.19"/>
<circle cx="256.6" cy="211.5" r="2.3" fill="url(#sf)" opacity="0.43"/>
<circle cx="209.5" cy="226.3" r="1.4" fill="url(#sf)" opacity="0.38"/>
<circle cx="273.3" cy="216.7" r="1.6" fill="url(#sf)" opacity="0.17"/>
<circle cx="277.4" cy="168.0" r="2.0" fill="url(#sf)" opacity="0.33"/>
<circle cx="218.3" cy="212.5" r="1.4" fill="url(#sf)" opacity="0.37"/>
<circle cx="266.9" cy="166.6" r="2.2" fill="url(#sf)" opacity="0.31"/>
<circle cx="268.5" cy="154.3" r="1.7" fill="url(#sf)" opacity="0.24"/>
<circle cx="314.7" cy="157.5" r="2.1" fill="url(#sf)" opacity="0.40"/>
<circle cx="229.2" cy="117.0" r="1.9" fill="url(#sf)" opacity="0.27"/>
<circle cx="248.9" cy="179.9" r="1.3" fill="url(#sf)" opacity="0.30"/>
<circle cx="251.9" cy="129.0" r="1.9" fill="url(#sf)" opacity="0.21"/>
<circle cx="234.9" cy="210.4" r="1.9" fill="url(#sf)" opacity="0.30"/>
<circle cx="320.1" cy="176.5" r="1.4" fill="url(#sf)" opacity="0.38"/>
<circle cx="213.2" cy="247.4" r="1.7" fill="url(#sf)" opacity="0.42"/>
<circle cx="258.1" cy="197.6" r="1.4" fill="url(#sf)" opacity="0.43"/>
<circle cx="118.1" cy="182.3" r="1.3" fill="url(#sf)" opacity="0.30"/>
<circle cx="259.9" cy="157.9" r="1.8" fill="url(#sf)" opacity="0.38"/>
<circle cx="184.6" cy="189.1" r="1.7" fill="url(#sf)" opacity="0.41"/>
<circle cx="259.6" cy="179.6" r="1.6" fill="url(#sf)" opacity="0.42"/>
<circle cx="286.4" cy="198.9" r="1.6" fill="url(#sf)" opacity="0.18"/>
<circle cx="247.4" cy="216.2" r="1.2" fill="url(#sf)" opacity="0.30"/>
<circle cx="257.6" cy="167.4" r="1.6" fill="url(#sf)" opacity="0.25"/>
<circle cx="267.5" cy="176.9" r="2.2" fill="url(#sf)" opacity="0.34"/>
<circle cx="276.2" cy="178.4" r="1.6" fill="url(#sf)" opacity="0.23"/>
<circle cx="271.8" cy="182.7" r="2.1" fill="url(#sf)" opacity="0.38"/>
<circle cx="233.4" cy="186.1" r="1.4" fill="url(#sf)" opacity="0.49"/>
<circle cx="248.9" cy="176.9" r="2.1" fill="url(#sf)" opacity="0.44"/>
<circle cx="258.3" cy="237.3" r="1.8" fill="url(#sf)" opacity="0.20"/>
<circle cx="216.0" cy="268.9" r="2.1" fill="url(#sf)" opacity="0.21"/>
<circle cx="268.1" cy="232.9" r="1.7" fill="url(#sf)" opacity="0.22"/>
<circle cx="268.0" cy="196.3" r="1.5" fill="url(#sf)" opacity="0.24"/>
<circle cx="241.0" cy="204.2" r="1.7" fill="url(#sf)" opacity="0.38"/>
<circle cx="233.2" cy="242.3" r="2.2" fill="url(#sf)" opacity="0.45"/>
<circle cx="274.9" cy="189.2" r="2.2" fill="url(#sf)" opacity="0.43"/>
<circle cx="278.0" cy="184.1" r="1.9" fill="url(#sf)" opacity="0.17"/>
<circle cx="275.7" cy="198.5" r="1.9" fill="url(#sf)" opacity="0.25"/>
<circle cx="279.0" cy="213.4" r="1.5" fill="url(#sf)" opacity="0.42"/>
<circle cx="286.4" cy="225.6" r="2.2" fill="url(#sf)" opacity="0.43"/>
<circle cx="284.7" cy="187.6" r="1.9" fill="url(#sf)" opacity="0.43"/>
<circle cx="312.7" cy="166.1" r="2.1" fill="url(#sf)" opacity="0.45"/>
<circle cx="261.0" cy="179.8" r="1.8" fill="url(#sf)" opacity="0.41"/>
<circle cx="295.6" cy="176.3" r="1.8" fill="url(#sf)" opacity="0.25"/>
<circle cx="284.3" cy="219.2" r="1.7" fill="url(#sf)" opacity="0.18"/>
<circle cx="292.3" cy="230.6" r="1.7" fill="url(#sf)" opacity="0.33"/>
<circle cx="297.1" cy="167.6" r="1.2" fill="url(#sf)" opacity="0.45"/>
<circle cx="233.5" cy="186.0" r="1.9" fill="url(#sf)" opacity="0.45"/>
<circle cx="240.6" cy="216.4" r="2.3" fill="url(#sf)" opacity="0.19"/>
<circle cx="234.5" cy="161.1" r="1.2" fill="url(#sf)" opacity="0.37"/>
<circle cx="321.1" cy="176.6" r="1.6" fill="url(#sf)" opacity="0.49"/>
<circle cx="227.8" cy="204.6" r="2.2" fill="url(#sf)" opacity="0.17"/>
<circle cx="224.8" cy="156.4" r="1.6" fill="url(#sf)" opacity="0.45"/>
<circle cx="237.5" cy="205.7" r="1.8" fill="url(#sf)" opacity="0.42"/>
<circle cx="247.7" cy="209.7" r="1.7" fill="url(#sf)" opacity="0.35"/>
<circle cx="246.4" cy="281.9" r="2.1" fill="url(#sf)" opacity="0.25"/>
<circle cx="263.3" cy="240.9" r="1.8" fill="url(#sf)" opacity="0.49"/>
<circle cx="282.9" cy="148.2" r="1.6" fill="url(#sf)" opacity="0.27"/>
<circle cx="244.9" cy="186.2" r="1.9" fill="url(#sf)" opacity="0.43"/>
<circle cx="266.9" cy="189.5" r="2.2" fill="url(#sf)" opacity="0.35"/>
<circle cx="265.0" cy="212.2" r="1.2" fill="url(#sf)" opacity="0.22"/>
<circle cx="167.2" cy="118.0" r="1.9" fill="url(#sf)" opacity="0.36"/>
<circle cx="176.0" cy="122.1" r="1.9" fill="url(#sf)" opacity="0.32"/>
<circle cx="220.0" cy="166.8" r="1.9" fill="url(#sf)" opacity="0.23"/>
<circle cx="215.1" cy="215.2" r="2.0" fill="url(#sf)" opacity="0.19"/>
<circle cx="289.5" cy="205.5" r="2.1" fill="url(#sf)" opacity="0.47"/>
<circle cx="231.9" cy="240.5" r="2.1" fill="url(#sf)" opacity="0.43"/>
<circle cx="266.5" cy="245.8" r="1.5" fill="url(#sf)" opacity="0.30"/>
<circle cx="242.5" cy="212.8" r="1.9" fill="url(#sf)" opacity="0.48"/>
<circle cx="257.2" cy="195.4" r="1.2" fill="url(#sf)" opacity="0.20"/>
<circle cx="197.7" cy="164.2" r="2.2" fill="url(#sf)" opacity="0.27"/>
<circle cx="262.9" cy="205.6" r="1.9" fill="url(#sf)" opacity="0.48"/>
<circle cx="235.8" cy="220.8" r="1.3" fill="url(#sf)" opacity="0.38"/>
<circle cx="282.1" cy="219.4" r="1.2" fill="url(#sf)" opacity="0.16"/>
<circle cx="310.5" cy="240.6" r="2.3" fill="url(#sf)" opacity="0.19"/>
<circle cx="337.2" cy="272.5" r="1.2" fill="url(#sf)" opacity="0.34"/>
<circle cx="266.3" cy="176.0" r="1.4" fill="url(#sf)" opacity="0.18"/>
<circle cx="252.5" cy="130.6" r="2.1" fill="url(#sf)" opacity="0.35"/>
<circle cx="258.4" cy="189.7" r="2.0" fill="url(#sf)" opacity="0.32"/>
<circle cx="265.2" cy="342.3" r="2.3" fill="url(#sf)" opacity="0.34"/>
<circle cx="275.9" cy="201.3" r="1.9" fill="url(#sf)" opacity="0.44"/>
<circle cx="263.3" cy="214.3" r="2.0" fill="url(#sf)" opacity="0.22"/>
<circle cx="173.5" cy="208.8" r="1.3" fill="url(#sf)" opacity="0.24"/>
<circle cx="225.8" cy="218.0" r="1.9" fill="url(#sf)" opacity="0.21"/>
<circle cx="218.6" cy="258.8" r="1.9" fill="url(#sf)" opacity="0.32"/>
<circle cx="242.5" cy="223.6" r="2.1" fill="url(#sf)" opacity="0.48"/>
<circle cx="201.2" cy="170.4" r="1.5" fill="url(#sf)" opacity="0.15"/>
<circle cx="297.0" cy="147.3" r="1.6" fill="url(#sf)" opacity="0.37"/>
<circle cx="199.9" cy="149.8" r="1.5" fill="url(#sf)" opacity="0.26"/>
<circle cx="191.6" cy="276.2" r="2.0" fill="url(#sf)" opacity="0.31"/>
<circle cx="308.6" cy="95.3" r="1.5" fill="url(#sf)" opacity="0.14"/>
<circle cx="245.9" cy="212.7" r="1.8" fill="url(#sf)" opacity="0.44"/>
<circle cx="372.7" cy="228.9" r="2.1" fill="url(#sf)" opacity="0.37"/>
<circle cx="180.4" cy="157.7" r="1.5" fill="url(#sf)" opacity="0.38"/>
<circle cx="237.2" cy="128.1" r="2.2" fill="url(#sf)" opacity="0.24"/>
<circle cx="254.5" cy="195.6" r="2.1" fill="url(#sf)" opacity="0.23"/>
<circle cx="330.1" cy="172.5" r="1.5" fill="url(#sf)" opacity="0.37"/>
<circle cx="213.2" cy="212.9" r="1.4" fill="url(#sf)" opacity="0.25"/>
<circle cx="286.3" cy="135.3" r="1.7" fill="url(#sf)" opacity="0.19"/>
<circle cx="279.8" cy="122.4" r="1.5" fill="url(#sf)" opacity="0.30"/>
<circle cx="353.6" cy="125.9" r="1.8" fill="url(#sf)" opacity="0.27"/>
<circle cx="286.6" cy="244.8" r="1.4" fill="url(#sf)" opacity="0.22"/>
<circle cx="229.8" cy="246.1" r="1.8" fill="url(#sf)" opacity="0.30"/>
<circle cx="293.5" cy="234.2" r="1.2" fill="url(#sf)" opacity="0.50"/>
<circle cx="294.1" cy="220.5" r="1.9" fill="url(#sf)" opacity="0.43"/>
<circle cx="252.6" cy="189.2" r="1.6" fill="url(#sf)" opacity="0.34"/>
<circle cx="277.4" cy="202.4" r="2.3" fill="url(#sf)" opacity="0.45"/>
<circle cx="232.8" cy="184.4" r="1.5" fill="url(#sf)" opacity="0.42"/>
<circle cx="302.2" cy="188.9" r="2.0" fill="url(#sf)" opacity="0.44"/>
<circle cx="293.5" cy="206.6" r="1.4" fill="url(#sf)" opacity="0.22"/>
<circle cx="283.1" cy="205.3" r="1.8" fill="url(#sf)" opacity="0.46"/>
<circle cx="304.3" cy="188.4" r="2.2" fill="url(#sf)" opacity="0.18"/>
<circle cx="230.0" cy="229.7" r="1.3" fill="url(#sf)" opacity="0.49"/>
<circle cx="245.3" cy="190.5" r="1.9" fill="url(#sf)" opacity="0.49"/>
<circle cx="225.0" cy="235.4" r="1.7" fill="url(#sf)" opacity="0.21"/>
<circle cx="291.7" cy="206.3" r="1.5" fill="url(#sf)" opacity="0.28"/>
<circle cx="365.1" cy="134.8" r="2.1" fill="url(#sf)" opacity="0.15"/>
<circle cx="250.1" cy="128.6" r="1.9" fill="url(#sf)" opacity="0.42"/>
<circle cx="276.7" cy="210.7" r="2.0" fill="url(#sf)" opacity="0.48"/>
<circle cx="251.6" cy="254.8" r="1.9" fill="url(#sf)" opacity="0.42"/>
<circle cx="261.4" cy="215.5" r="1.5" fill="url(#sf)" opacity="0.20"/>
<circle cx="287.9" cy="234.7" r="1.5" fill="url(#sf)" opacity="0.21"/>
<circle cx="325.6" cy="205.1" r="2.0" fill="url(#sf)" opacity="0.23"/>
<circle cx="278.5" cy="195.8" r="1.4" fill="url(#sf)" opacity="0.48"/>
<circle cx="343.8" cy="137.5" r="1.4" fill="url(#sf)" opacity="0.27"/>
<circle cx="283.3" cy="193.7" r="2.1" fill="url(#sf)" opacity="0.37"/>
<circle cx="248.9" cy="232.0" r="2.1" fill="url(#sf)" opacity="0.32"/>
<circle cx="300.9" cy="240.8" r="1.4" fill="url(#sf)" opacity="0.18"/>
<circle cx="210.5" cy="180.3" r="1.4" fill="url(#sf)" opacity="0.46"/>
<circle cx="246.6" cy="214.3" r="1.4" fill="url(#sf)" opacity="0.25"/>
<circle cx="224.2" cy="276.6" r="1.4" fill="url(#sf)" opacity="0.28"/>
<circle cx="292.6" cy="184.0" r="1.3" fill="url(#sf)" opacity="0.49"/>
<circle cx="279.0" cy="192.7" r="1.9" fill="url(#sf)" opacity="0.23"/>
<circle cx="260.0" cy="238.4" r="1.5" fill="url(#sf)" opacity="0.23"/>
<circle cx="300.4" cy="198.8" r="2.3" fill="url(#sf)" opacity="0.47"/>
<circle cx="264.9" cy="216.2" r="2.2" fill="url(#sf)" opacity="0.18"/>
<circle cx="251.6" cy="261.9" r="2.3" fill="url(#sf)" opacity="0.17"/>
<circle cx="226.0" cy="267.1" r="1.4" fill="url(#sf)" opacity="0.14"/>
<circle cx="184.1" cy="186.3" r="1.4" fill="url(#sf)" opacity="0.26"/>
<circle cx="293.2" cy="321.3" r="1.8" fill="url(#sf)" opacity="0.18"/>
<circle cx="271.5" cy="179.6" r="2.0" fill="url(#sf)" opacity="0.23"/>
<circle cx="281.4" cy="208.3" r="1.9" fill="url(#sf)" opacity="0.33"/>
<circle cx="276.0" cy="226.1" r="1.9" fill="url(#sf)" opacity="0.40"/>
<circle cx="199.2" cy="160.7" r="1.4" fill="url(#sf)" opacity="0.15"/>
<circle cx="214.7" cy="235.8" r="2.0" fill="url(#sf)" opacity="0.18"/>
<circle cx="228.0" cy="269.4" r="2.1" fill="url(#sf)" opacity="0.39"/>
<circle cx="308.6" cy="204.5" r="2.2" fill="url(#sf)" opacity="0.32"/>
<circle cx="258.6" cy="300.3" r="1.4" fill="url(#sf)" opacity="0.38"/>
<circle cx="285.2" cy="227.8" r="1.6" fill="url(#sf)" opacity="0.36"/>
<circle cx="263.6" cy="199.9" r="1.7" fill="url(#sf)" opacity="0.34"/>
<circle cx="264.9" cy="183.4" r="2.1" fill="url(#sf)" opacity="0.45"/>
<circle cx="261.8" cy="172.3" r="1.6" fill="url(#sf)" opacity="0.42"/>
<circle cx="278.1" cy="191.1" r="2.2" fill="url(#sf)" opacity="0.33"/>
<circle cx="228.1" cy="192.7" r="1.8" fill="url(#sf)" opacity="0.17"/>
<circle cx="278.6" cy="222.2" r="1.3" fill="url(#sf)" opacity="0.25"/>
<circle cx="349.0" cy="215.9" r="1.3" fill="url(#sf)" opacity="0.34"/>
<circle cx="290.7" cy="203.0" r="1.9" fill="url(#sf)" opacity="0.36"/>
<circle cx="256.4" cy="160.3" r="1.3" fill="url(#sf)" opacity="0.46"/>
<circle cx="328.5" cy="218.0" r="1.3" fill="url(#sf)" opacity="0.33"/>
<circle cx="261.3" cy="240.4" r="1.3" fill="url(#sf)" opacity="0.30"/>
<circle cx="253.2" cy="190.4" r="2.1" fill="url(#sf)" opacity="0.21"/>
<circle cx="267.8" cy="154.4" r="1.4" fill="url(#sf)" opacity="0.44"/>
<circle cx="155.6" cy="295.8" r="1.7" fill="url(#sf)" opacity="0.38"/>
<circle cx="235.2" cy="226.4" r="2.2" fill="url(#sf)" opacity="0.42"/>
<circle cx="270.6" cy="230.7" r="1.6" fill="url(#sf)" opacity="0.31"/>
<circle cx="335.8" cy="159.7" r="2.1" fill="url(#sf)" opacity="0.38"/>
<circle cx="256.3" cy="199.2" r="2.3" fill="url(#sf)" opacity="0.48"/>
<circle cx="246.6" cy="212.4" r="1.9" fill="url(#sf)" opacity="0.28"/>
<circle cx="307.6" cy="218.6" r="1.7" fill="url(#sf)" opacity="0.33"/>
<circle cx="274.5" cy="207.4" r="2.3" fill="url(#sf)" opacity="0.42"/>
<circle cx="170.3" cy="91.3" r="2.1" fill="url(#sf)" opacity="0.39"/>
<circle cx="372.6" cy="223.4" r="1.9" fill="url(#sf)" opacity="0.21"/>
<circle cx="260.4" cy="257.0" r="1.8" fill="url(#sf)" opacity="0.47"/>
<circle cx="268.6" cy="251.3" r="1.8" fill="url(#sf)" opacity="0.31"/>
<circle cx="229.6" cy="363.7" r="1.5" fill="url(#sf)" opacity="0.32"/>
<circle cx="254.2" cy="190.8" r="2.3" fill="url(#sf)" opacity="0.33"/>
<circle cx="243.2" cy="206.1" r="1.8" fill="url(#sf)" opacity="0.21"/>
<circle cx="280.9" cy="213.7" r="1.5" fill="url(#sf)" opacity="0.30"/>
<circle cx="269.9" cy="227.9" r="1.3" fill="url(#sf)" opacity="0.35"/>
<circle cx="200.8" cy="144.4" r="1.8" fill="url(#sf)" opacity="0.32"/>
<circle cx="263.3" cy="178.9" r="1.7" fill="url(#sf)" opacity="0.35"/>
<circle cx="219.9" cy="210.3" r="1.5" fill="url(#sf)" opacity="0.24"/>
<circle cx="245.3" cy="198.8" r="1.6" fill="url(#sf)" opacity="0.36"/>
<circle cx="264.4" cy="206.4" r="2.1" fill="url(#sf)" opacity="0.24"/>
<circle cx="224.0" cy="203.0" r="1.5" fill="url(#sf)" opacity="0.50"/>
<circle cx="272.6" cy="173.2" r="1.4" fill="url(#sf)" opacity="0.18"/>
<circle cx="175.9" cy="237.4" r="1.3" fill="url(#sf)" opacity="0.25"/>
<circle cx="265.5" cy="164.4" r="1.3" fill="url(#sf)" opacity="0.24"/>
<circle cx="305.8" cy="254.7" r="1.6" fill="url(#sf)" opacity="0.28"/>
<circle cx="226.6" cy="162.8" r="2.1" fill="url(#sf)" opacity="0.44"/>
<circle cx="265.9" cy="158.9" r="2.0" fill="url(#sf)" opacity="0.42"/>
<circle cx="277.2" cy="162.8" r="2.0" fill="url(#sf)" opacity="0.47"/>
<circle cx="281.2" cy="187.5" r="1.2" fill="url(#sf)" opacity="0.42"/>
<circle cx="221.4" cy="201.2" r="2.3" fill="url(#sf)" opacity="0.35"/>
<circle cx="276.1" cy="166.5" r="2.2" fill="url(#sf)" opacity="0.37"/>
<circle cx="237.7" cy="210.2" r="1.7" fill="url(#sf)" opacity="0.41"/>
<circle cx="247.5" cy="218.1" r="1.8" fill="url(#sf)" opacity="0.29"/>
<circle cx="275.5" cy="172.2" r="2.1" fill="url(#sf)" opacity="0.33"/>
<circle cx="283.5" cy="234.1" r="1.5" fill="url(#sf)" opacity="0.21"/>
<circle cx="228.3" cy="177.8" r="1.3" fill="url(#sf)" opacity="0.47"/>
<circle cx="285.0" cy="176.2" r="2.1" fill="url(#sf)" opacity="0.49"/>
<circle cx="248.6" cy="210.7" r="2.2" fill="url(#sf)" opacity="0.16"/>
<circle cx="257.7" cy="195.8" r="1.7" fill="url(#sf)" opacity="0.47"/>
<circle cx="199.2" cy="183.4" r="2.3" fill="url(#sf)" opacity="0.29"/>
<circle cx="252.3" cy="162.3" r="1.6" fill="url(#sf)" opacity="0.28"/>
<circle cx="240.2" cy="239.4" r="2.2" fill="url(#sf)" opacity="0.39"/>
<circle cx="303.2" cy="225.3" r="1.6" fill="url(#sf)" opacity="0.30"/>
<circle cx="228.4" cy="180.3" r="2.2" fill="url(#sf)" opacity="0.49"/>
<circle cx="232.1" cy="215.1" r="1.9" fill="url(#sf)" opacity="0.50"/>
<circle cx="238.9" cy="194.9" r="2.1" fill="url(#sf)" opacity="0.22"/>
<circle cx="297.5" cy="196.7" r="2.1" fill="url(#sf)" opacity="0.33"/>
<circle cx="282.2" cy="190.2" r="2.0" fill="url(#sf)" opacity="0.44"/>
<circle cx="173.8" cy="252.1" r="1.4" fill="url(#sf)" opacity="0.22"/>
<circle cx="227.5" cy="199.3" r="1.4" fill="url(#sf)" opacity="0.22"/>
<circle cx="227.6" cy="169.4" r="1.6" fill="url(#sf)" opacity="0.50"/>
<circle cx="319.3" cy="214.3" r="1.7" fill="url(#sf)" opacity="0.43"/>
<circle cx="258.5" cy="174.2" r="1.2" fill="url(#sf)" opacity="0.26"/>
<circle cx="192.5" cy="154.7" r="1.9" fill="url(#sf)" opacity="0.19"/>
<circle cx="230.7" cy="187.4" r="1.5" fill="url(#sf)" opacity="0.38"/>
<circle cx="311.6" cy="199.8" r="1.8" fill="url(#sf)" opacity="0.30"/>
<circle cx="278.6" cy="215.3" r="2.0" fill="url(#sf)" opacity="0.20"/>
<circle cx="276.6" cy="214.9" r="1.8" fill="url(#sf)" opacity="0.44"/>
<circle cx="286.2" cy="153.8" r="1.3" fill="url(#sf)" opacity="0.16"/>
<circle cx="237.4" cy="264.4" r="2.0" fill="url(#sf)" opacity="0.24"/>
<circle cx="266.7" cy="221.1" r="1.3" fill="url(#sf)" opacity="0.47"/>
<circle cx="241.4" cy="238.9" r="1.7" fill="url(#sf)" opacity="0.29"/>
<circle cx="278.6" cy="192.5" r="1.8" fill="url(#sf)" opacity="0.49"/>
<circle cx="242.4" cy="175.7" r="1.5" fill="url(#sf)" opacity="0.17"/>
<circle cx="354.5" cy="89.7" r="1.5" fill="url(#sf)" opacity="0.40"/>
<circle cx="241.9" cy="277.4" r="1.9" fill="url(#sf)" opacity="0.41"/>
<circle cx="306.9" cy="188.1" r="1.5" fill="url(#sf)" opacity="0.29"/>
<circle cx="280.0" cy="262.0" r="1.5" fill="url(#sf)" opacity="0.46"/>
<circle cx="279.2" cy="162.7" r="1.5" fill="url(#sf)" opacity="0.22"/>
<circle cx="280.9" cy="229.4" r="2.3" fill="url(#sf)" opacity="0.26"/>
<circle cx="302.8" cy="230.5" r="1.8" fill="url(#sf)" opacity="0.29"/>
<circle cx="299.9" cy="214.2" r="1.3" fill="url(#sf)" opacity="0.44"/>
<circle cx="269.8" cy="231.4" r="1.4" fill="url(#sf)" opacity="0.26"/>
<circle cx="292.6" cy="205.9" r="1.9" fill="url(#sf)" opacity="0.28"/>
<circle cx="263.4" cy="181.6" r="1.3" fill="url(#sf)" opacity="0.25"/>
<circle cx="329.0" cy="263.0" r="1.7" fill="url(#sf)" opacity="0.38"/>
<circle cx="311.2" cy="266.7" r="1.6" fill="url(#sf)" opacity="0.34"/>
<circle cx="300.1" cy="192.2" r="1.4" fill="url(#sf)" opacity="0.48"/>
<circle cx="274.6" cy="241.0" r="1.7" fill="url(#sf)" opacity="0.20"/>
<circle cx="264.7" cy="261.2" r="2.2" fill="url(#sf)" opacity="0.36"/>
<circle cx="269.6" cy="232.4" r="1.9" fill="url(#sf)" opacity="0.23"/>
<circle cx="340.8" cy="270.6" r="1.8" fill="url(#sf)" opacity="0.29"/>
<circle cx="272.4" cy="174.6" r="1.6" fill="url(#sf)" opacity="0.38"/>
<circle cx="251.7" cy="243.1" r="1.6" fill="url(#sf)" opacity="0.19"/>
<circle cx="281.3" cy="183.7" r="1.6" fill="url(#sf)" opacity="0.39"/>
<circle cx="253.2" cy="194.2" r="1.6" fill="url(#sf)" opacity="0.33"/>
<circle cx="294.2" cy="211.8" r="1.5" fill="url(#sf)" opacity="0.24"/>
<circle cx="265.1" cy="183.0" r="1.5" fill="url(#sf)" opacity="0.30"/>
<circle cx="287.7" cy="81.2" r="2.2" fill="url(#sf)" opacity="0.38"/>
<circle cx="265.8" cy="218.7" r="1.2" fill="url(#sf)" opacity="0.39"/>
<circle cx="235.9" cy="245.0" r="1.7" fill="url(#sf)" opacity="0.38"/>
<circle cx="269.4" cy="260.3" r="2.1" fill="url(#sf)" opacity="0.28"/>
<circle cx="290.2" cy="247.4" r="1.3" fill="url(#sf)" opacity="0.47"/>
<circle cx="253.7" cy="137.6" r="1.2" fill="url(#sf)" opacity="0.17"/>
<circle cx="275.3" cy="219.7" r="1.5" fill="url(#sf)" opacity="0.29"/>
<circle cx="264.6" cy="211.0" r="1.9" fill="url(#sf)" opacity="0.22"/>
<circle cx="189.1" cy="163.0" r="2.0" fill="url(#sf)" opacity="0.21"/>
<circle cx="254.4" cy="167.6" r="1.6" fill="url(#sf)" opacity="0.16"/>
<circle cx="283.1" cy="115.3" r="1.5" fill="url(#sf)" opacity="0.15"/>
<circle cx="196.1" cy="142.4" r="1.3" fill="url(#sf)" opacity="0.21"/>
<circle cx="273.2" cy="184.2" r="1.4" fill="url(#sf)" opacity="0.47"/>
<circle cx="326.5" cy="235.3" r="2.0" fill="url(#sf)" opacity="0.29"/>
<circle cx="300.6" cy="141.6" r="1.5" fill="url(#sf)" opacity="0.19"/>
<circle cx="126.5" cy="274.3" r="2.2" fill="url(#sf)" opacity="0.34"/>
<circle cx="300.4" cy="143.2" r="1.9" fill="url(#sf)" opacity="0.31"/>
<circle cx="264.7" cy="188.6" r="1.7" fill="url(#sf)" opacity="0.33"/>
<circle cx="364.3" cy="299.3" r="2.0" fill="url(#sf)" opacity="0.15"/>
<circle cx="289.5" cy="144.0" r="1.5" fill="url(#sf)" opacity="0.35"/>
<circle cx="218.4" cy="186.3" r="1.5" fill="url(#sf)" opacity="0.18"/>
<circle cx="242.2" cy="217.1" r="1.4" fill="url(#sf)" opacity="0.27"/>
<circle cx="263.8" cy="182.7" r="1.9" fill="url(#sf)" opacity="0.24"/>
<circle cx="244.2" cy="198.2" r="1.7" fill="url(#sf)" opacity="0.48"/>
<circle cx="259.4" cy="230.0" r="2.2" fill="url(#sf)" opacity="0.21"/>
<circle cx="246.0" cy="239.9" r="2.1" fill="url(#sf)" opacity="0.35"/>
<circle cx="302.5" cy="261.1" r="1.9" fill="url(#sf)" opacity="0.36"/>
<circle cx="272.6" cy="163.1" r="2.1" fill="url(#sf)" opacity="0.20"/>
<circle cx="251.3" cy="221.6" r="1.4" fill="url(#sf)" opacity="0.18"/>
<circle cx="277.6" cy="226.0" r="2.0" fill="url(#sf)" opacity="0.31"/>
<circle cx="261.1" cy="215.9" r="1.7" fill="url(#sf)" opacity="0.28"/>
<circle cx="287.3" cy="209.5" r="1.2" fill="url(#sf)" opacity="0.50"/>
<circle cx="327.1" cy="234.6" r="2.0" fill="url(#sf)" opacity="0.49"/>
<circle cx="304.0" cy="229.3" r="1.7" fill="url(#sf)" opacity="0.31"/>
<circle cx="247.8" cy="194.8" r="1.2" fill="url(#sf)" opacity="0.47"/>
<circle cx="231.9" cy="162.4" r="2.2" fill="url(#sf)" opacity="0.38"/>
<circle cx="269.4" cy="225.8" r="1.4" fill="url(#sf)" opacity="0.17"/>
<circle cx="307.2" cy="139.8" r="1.5" fill="url(#sf)" opacity="0.19"/>
<circle cx="298.5" cy="157.3" r="2.2" fill="url(#sf)" opacity="0.22"/>
<circle cx="304.6" cy="135.8" r="2.0" fill="url(#sf)" opacity="0.23"/>
<circle cx="278.6" cy="181.5" r="1.6" fill="url(#sf)" opacity="0.29"/>
<circle cx="238.6" cy="233.1" r="2.1" fill="url(#sf)" opacity="0.24"/>
<circle cx="258.4" cy="195.9" r="1.9" fill="url(#sf)" opacity="0.44"/>
<circle cx="319.0" cy="166.6" r="2.2" fill="url(#sf)" opacity="0.33"/>
<circle cx="291.0" cy="234.4" r="1.5" fill="url(#sf)" opacity="0.36"/>
<circle cx="263.2" cy="186.9" r="1.4" fill="url(#sf)" opacity="0.31"/>
<circle cx="283.8" cy="204.5" r="1.7" fill="url(#sf)" opacity="0.22"/>
<circle cx="331.9" cy="201.7" r="2.1" fill="url(#sf)" opacity="0.45"/>
<circle cx="202.3" cy="234.2" r="1.5" fill="url(#sf)" opacity="0.33"/>
<circle cx="232.3" cy="220.3" r="1.6" fill="url(#sf)" opacity="0.31"/>
<circle cx="294.4" cy="151.3" r="2.2" fill="url(#sf)" opacity="0.22"/>
<circle cx="242.9" cy="210.3" r="1.8" fill="url(#sf)" opacity="0.28"/>
<circle cx="287.8" cy="211.8" r="1.6" fill="url(#sf)" opacity="0.32"/>
<circle cx="348.9" cy="110.2" r="2.3" fill="url(#sf)" opacity="0.41"/>
<circle cx="287.8" cy="153.7" r="1.3" fill="url(#sf)" opacity="0.39"/>
<circle cx="254.4" cy="248.0" r="1.8" fill="url(#sf)" opacity="0.48"/>
<circle cx="245.3" cy="169.4" r="1.5" fill="url(#sf)" opacity="0.28"/>
<circle cx="373.6" cy="219.1" r="1.4" fill="url(#sf)" opacity="0.33"/>
<circle cx="300.5" cy="219.4" r="1.9" fill="url(#sf)" opacity="0.29"/>
<circle cx="228.2" cy="224.1" r="1.8" fill="url(#sf)" opacity="0.35"/>
<circle cx="294.1" cy="222.7" r="1.4" fill="url(#sf)" opacity="0.46"/>
<circle cx="302.4" cy="229.2" r="2.1" fill="url(#sf)" opacity="0.25"/>
<circle cx="253.2" cy="197.5" r="1.5" fill="url(#sf)" opacity="0.33"/>
<circle cx="275.4" cy="244.7" r="1.8" fill="url(#sf)" opacity="0.20"/>
<circle cx="233.6" cy="178.7" r="1.3" fill="url(#sf)" opacity="0.30"/>
<circle cx="255.5" cy="205.9" r="2.1" fill="url(#sf)" opacity="0.35"/>
<circle cx="271.5" cy="138.8" r="1.3" fill="url(#sf)" opacity="0.50"/>
<circle cx="319.2" cy="238.2" r="2.1" fill="url(#sf)" opacity="0.29"/>
<circle cx="288.9" cy="195.5" r="1.8" fill="url(#sf)" opacity="0.42"/>
<circle cx="271.9" cy="182.2" r="1.3" fill="url(#sf)" opacity="0.24"/>
<circle cx="300.8" cy="203.7" r="1.9" fill="url(#sf)" opacity="0.23"/>
<circle cx="261.4" cy="173.7" r="1.7" fill="url(#sf)" opacity="0.46"/>
<circle cx="304.0" cy="164.1" r="1.8" fill="url(#sf)" opacity="0.47"/>
<circle cx="317.9" cy="287.4" r="2.0" fill="url(#sf)" opacity="0.23"/>
<circle cx="239.3" cy="137.3" r="2.1" fill="url(#sf)" opacity="0.20"/>
<circle cx="266.2" cy="168.6" r="2.2" fill="url(#sf)" opacity="0.41"/>
<circle cx="259.5" cy="193.5" r="1.3" fill="url(#sf)" opacity="0.35"/>
<circle cx="328.1" cy="251.5" r="2.2" fill="url(#sf)" opacity="0.33"/>
<circle cx="277.7" cy="224.4" r="1.7" fill="url(#sf)" opacity="0.44"/>
<circle cx="304.3" cy="231.3" r="1.2" fill="url(#sf)" opacity="0.20"/>
<circle cx="299.5" cy="271.8" r="1.8" fill="url(#sf)" opacity="0.22"/>
<circle cx="226.2" cy="240.2" r="1.4" fill="url(#sf)" opacity="0.46"/>
<circle cx="252.7" cy="160.3" r="2.1" fill="url(#sf)" opacity="0.48"/>
<circle cx="264.6" cy="207.0" r="1.4" fill="url(#sf)" opacity="0.33"/>
<circle cx="300.2" cy="104.9" r="1.2" fill="url(#sf)" opacity="0.19"/>
<circle cx="233.7" cy="126.5" r="1.6" fill="url(#sf)" opacity="0.27"/>
<circle cx="280.0" cy="184.1" r="1.6" fill="url(#sf)" opacity="0.46"/>
<circle cx="313.0" cy="223.4" r="1.6" fill="url(#sf)" opacity="0.23"/>
<circle cx="174.5" cy="141.4" r="1.2" fill="url(#sf)" opacity="0.19"/>
<circle cx="238.0" cy="206.9" r="1.8" fill="url(#sf)" opacity="0.29"/>
<circle cx="299.8" cy="201.8" r="1.8" fill="url(#sf)" opacity="0.27"/>
<circle cx="260.3" cy="202.8" r="2.3" fill="url(#sf)" opacity="0.18"/>
<circle cx="259.7" cy="183.7" r="1.5" fill="url(#sf)" opacity="0.25"/>
<circle cx="265.7" cy="240.9" r="1.8" fill="url(#sf)" opacity="0.34"/>
<circle cx="258.9" cy="196.6" r="2.0" fill="url(#sf)" opacity="0.46"/>
<circle cx="220.6" cy="147.2" r="1.9" fill="url(#sf)" opacity="0.24"/>
<circle cx="276.4" cy="174.8" r="2.2" fill="url(#sf)" opacity="0.48"/>
<circle cx="249.7" cy="254.7" r="2.0" fill="url(#sf)" opacity="0.41"/>
<circle cx="241.7" cy="169.7" r="1.6" fill="url(#sf)" opacity="0.35"/>
<circle cx="300.5" cy="213.3" r="1.6" fill="url(#sf)" opacity="0.27"/>
<circle cx="242.5" cy="229.6" r="1.5" fill="url(#sf)" opacity="0.24"/>
<circle cx="289.0" cy="223.7" r="1.2" fill="url(#sf)" opacity="0.46"/>
<circle cx="233.8" cy="213.1" r="1.8" fill="url(#sf)" opacity="0.26"/>
<circle cx="287.6" cy="208.9" r="1.5" fill="url(#sf)" opacity="0.26"/>
<circle cx="208.4" cy="180.4" r="2.2" fill="url(#sf)" opacity="0.28"/>
<circle cx="155.6" cy="135.2" r="1.3" fill="url(#sf)" opacity="0.19"/>
<circle cx="315.5" cy="196.9" r="1.6" fill="url(#sf)" opacity="0.42"/>
<circle cx="292.9" cy="174.4" r="1.3" fill="url(#sf)" opacity="0.32"/>
<circle cx="250.3" cy="313.5" r="1.5" fill="url(#sf)" opacity="0.14"/>
<circle cx="266.5" cy="220.8" r="2.0" fill="url(#sf)" opacity="0.23"/>
<circle cx="279.2" cy="232.7" r="1.9" fill="url(#sf)" opacity="0.45"/>
<circle cx="286.4" cy="251.2" r="2.0" fill="url(#sf)" opacity="0.49"/>
<circle cx="311.6" cy="223.9" r="2.1" fill="url(#sf)" opacity="0.46"/>
<circle cx="288.6" cy="223.5" r="1.4" fill="url(#sf)" opacity="0.34"/>
<circle cx="203.9" cy="122.2" r="2.2" fill="url(#sf)" opacity="0.20"/>
<circle cx="268.7" cy="171.1" r="1.9" fill="url(#sf)" opacity="0.30"/>
<circle cx="238.9" cy="249.3" r="1.3" fill="url(#sf)" opacity="0.30"/>
<circle cx="260.5" cy="192.2" r="1.6" fill="url(#sf)" opacity="0.33"/>
<circle cx="266.7" cy="249.0" r="1.7" fill="url(#sf)" opacity="0.16"/>
<circle cx="145.1" cy="147.9" r="2.3" fill="url(#sf)" opacity="0.15"/>
<circle cx="260.7" cy="151.3" r="1.6" fill="url(#sf)" opacity="0.19"/>
<circle cx="281.2" cy="216.1" r="2.0" fill="url(#sf)" opacity="0.19"/>
<circle cx="197.2" cy="238.1" r="1.8" fill="url(#sf)" opacity="0.31"/>
<circle cx="244.2" cy="163.3" r="1.9" fill="url(#sf)" opacity="0.27"/>
<circle cx="265.6" cy="266.4" r="2.0" fill="url(#sf)" opacity="0.42"/>
<circle cx="242.5" cy="267.9" r="2.0" fill="url(#sf)" opacity="0.42"/>
<circle cx="262.2" cy="237.2" r="1.8" fill="url(#sf)" opacity="0.48"/>
<circle cx="287.1" cy="201.6" r="1.7" fill="url(#sf)" opacity="0.38"/>
<circle cx="222.1" cy="255.2" r="2.3" fill="url(#sf)" opacity="0.20"/>
<circle cx="326.7" cy="237.3" r="1.2" fill="url(#sf)" opacity="0.21"/>
<circle cx="255.6" cy="200.4" r="1.8" fill="url(#sf)" opacity="0.22"/>
<circle cx="168.7" cy="313.3" r="1.4" fill="url(#sf)" opacity="0.19"/>
<circle cx="326.4" cy="169.6" r="1.4" fill="url(#sf)" opacity="0.17"/>
<circle cx="272.2" cy="273.2" r="2.3" fill="url(#sf)" opacity="0.28"/>
<circle cx="239.6" cy="244.0" r="2.1" fill="url(#sf)" opacity="0.32"/>
<circle cx="292.9" cy="183.9" r="1.3" fill="url(#sf)" opacity="0.41"/>
<circle cx="260.5" cy="189.8" r="1.6" fill="url(#sf)" opacity="0.45"/>
<circle cx="256.7" cy="195.4" r="1.7" fill="url(#sf)" opacity="0.47"/>
<circle cx="158.5" cy="87.4" r="1.4" fill="url(#sf)" opacity="0.21"/>
<circle cx="245.2" cy="211.0" r="1.5" fill="url(#sf)" opacity="0.23"/>
<circle cx="225.7" cy="146.7" r="1.5" fill="url(#sf)" opacity="0.50"/>
<circle cx="247.7" cy="190.7" r="1.4" fill="url(#sf)" opacity="0.45"/>
<circle cx="258.1" cy="299.1" r="2.0" fill="url(#sf)" opacity="0.37"/>
<circle cx="255.6" cy="224.1" r="1.7" fill="url(#sf)" opacity="0.46"/>
<circle cx="260.5" cy="182.2" r="1.9" fill="url(#sf)" opacity="0.31"/>
<circle cx="303.5" cy="169.2" r="1.4" fill="url(#sf)" opacity="0.46"/>
<circle cx="274.6" cy="169.7" r="2.1" fill="url(#sf)" opacity="0.22"/>
<circle cx="365.6" cy="197.4" r="1.5" fill="url(#sf)" opacity="0.14"/>
<circle cx="285.6" cy="197.9" r="1.2" fill="url(#sf)" opacity="0.47"/>
<circle cx="267.1" cy="181.2" r="1.3" fill="url(#sf)" opacity="0.22"/>
<circle cx="317.4" cy="231.5" r="1.6" fill="url(#sf)" opacity="0.47"/>
<circle cx="314.6" cy="158.6" r="2.3" fill="url(#sf)" opacity="0.17"/>
<circle cx="275.2" cy="177.2" r="2.0" fill="url(#sf)" opacity="0.17"/>
<circle cx="273.5" cy="241.1" r="1.7" fill="url(#sf)" opacity="0.20"/>
<circle cx="277.5" cy="200.1" r="1.5" fill="url(#sf)" opacity="0.46"/>
<circle cx="251.2" cy="202.0" r="1.3" fill="url(#sf)" opacity="0.31"/>
<circle cx="260.4" cy="181.2" r="1.4" fill="url(#sf)" opacity="0.41"/>
<circle cx="299.6" cy="226.9" r="1.6" fill="url(#sf)" opacity="0.33"/>
<circle cx="193.6" cy="304.9" r="1.4" fill="url(#sf)" opacity="0.42"/>
<circle cx="256.5" cy="95.8" r="1.5" fill="url(#sf)" opacity="0.19"/>
<circle cx="292.4" cy="211.5" r="1.2" fill="url(#sf)" opacity="0.33"/>
<circle cx="236.7" cy="188.7" r="1.6" fill="url(#sf)" opacity="0.16"/>
<circle cx="235.5" cy="152.8" r="1.8" fill="url(#sf)" opacity="0.35"/>
<circle cx="327.0" cy="194.1" r="2.2" fill="url(#sf)" opacity="0.40"/>
<circle cx="254.8" cy="231.3" r="1.7" fill="url(#sf)" opacity="0.49"/>
<circle cx="244.0" cy="222.4" r="1.7" fill="url(#sf)" opacity="0.21"/>
<circle cx="264.5" cy="197.2" r="2.2" fill="url(#sf)" opacity="0.25"/>
<circle cx="233.2" cy="235.3" r="1.5" fill="url(#sf)" opacity="0.23"/>
<circle cx="278.4" cy="186.1" r="2.1" fill="url(#sf)" opacity="0.47"/>
<circle cx="264.6" cy="189.1" r="1.6" fill="url(#sf)" opacity="0.38"/>
<circle cx="251.1" cy="241.1" r="2.3" fill="url(#sf)" opacity="0.16"/>
<circle cx="309.2" cy="147.4" r="1.8" fill="url(#sf)" opacity="0.36"/>
<circle cx="252.1" cy="183.0" r="2.0" fill="url(#sf)" opacity="0.29"/>
<circle cx="220.5" cy="238.8" r="1.8" fill="url(#sf)" opacity="0.37"/>
<circle cx="243.9" cy="251.8" r="1.9" fill="url(#sf)" opacity="0.34"/>
<circle cx="250.8" cy="185.2" r="1.5" fill="url(#sf)" opacity="0.47"/>
<circle cx="261.9" cy="162.7" r="1.8" fill="url(#sf)" opacity="0.32"/>
<circle cx="283.6" cy="218.9" r="2.2" fill="url(#sf)" opacity="0.34"/>
<circle cx="227.2" cy="193.3" r="2.1" fill="url(#sf)" opacity="0.24"/>
<circle cx="277.9" cy="181.9" r="1.7" fill="url(#sf)" opacity="0.38"/>
<circle cx="335.2" cy="148.4" r="2.2" fill="url(#sf)" opacity="0.15"/>
<circle cx="284.9" cy="172.2" r="2.1" fill="url(#sf)" opacity="0.20"/>
<circle cx="268.6" cy="220.3" r="1.3" fill="url(#sf)" opacity="0.28"/>
<circle cx="191.3" cy="190.1" r="1.7" fill="url(#sf)" opacity="0.16"/>
<circle cx="302.3" cy="200.0" r="2.0" fill="url(#sf)" opacity="0.31"/>
<circle cx="280.4" cy="163.5" r="2.0" fill="url(#sf)" opacity="0.21"/>
<circle cx="230.4" cy="243.1" r="1.8" fill="url(#sf)" opacity="0.24"/>
<circle cx="251.6" cy="227.6" r="1.6" fill="url(#sf)" opacity="0.17"/>
<circle cx="248.6" cy="191.0" r="1.3" fill="url(#sf)" opacity="0.22"/>
<circle cx="259.2" cy="262.2" r="1.6" fill="url(#sf)" opacity="0.24"/>
<circle cx="341.4" cy="247.5" r="1.9" fill="url(#sf)" opacity="0.38"/>
<circle cx="248.9" cy="211.0" r="2.1" fill="url(#sf)" opacity="0.37"/>
<circle cx="299.7" cy="209.3" r="1.7" fill="url(#sf)" opacity="0.28"/>
<circle cx="251.5" cy="259.7" r="1.6" fill="url(#sf)" opacity="0.38"/>
<circle cx="220.8" cy="264.6" r="1.6" fill="url(#sf)" opacity="0.30"/>
<circle cx="316.9" cy="325.7" r="2.3" fill="url(#sf)" opacity="0.34"/>
<circle cx="252.6" cy="172.9" r="1.6" fill="url(#sf)" opacity="0.18"/>
<circle cx="219.1" cy="247.7" r="1.8" fill="url(#sf)" opacity="0.33"/>
<circle cx="273.9" cy="85.0" r="1.2" fill="url(#sf)" opacity="0.31"/>
<circle cx="232.0" cy="209.5" r="2.1" fill="url(#sf)" opacity="0.30"/>
<circle cx="298.6" cy="176.1" r="1.7" fill="url(#sf)" opacity="0.33"/>
<circle cx="287.5" cy="163.7" r="1.9" fill="url(#sf)" opacity="0.41"/>
<circle cx="301.6" cy="209.1" r="1.9" fill="url(#sf)" opacity="0.35"/>
<circle cx="277.6" cy="130.2" r="1.3" fill="url(#sf)" opacity="0.20"/>
<circle cx="274.8" cy="187.3" r="1.3" fill="url(#sf)" opacity="0.19"/>
<circle cx="206.3" cy="173.8" r="1.3" fill="url(#sf)" opacity="0.39"/>
<circle cx="207.8" cy="207.2" r="1.3" fill="url(#sf)" opacity="0.39"/>
<circle cx="238.6" cy="183.0" r="2.3" fill="url(#sf)" opacity="0.44"/>
<circle cx="330.0" cy="280.0" r="1.6" fill="url(#sf)" opacity="0.29"/>
<circle cx="274.5" cy="200.2" r="1.5" fill="url(#sf)" opacity="0.25"/>
<circle cx="267.9" cy="229.3" r="2.1" fill="url(#sf)" opacity="0.35"/>
<circle cx="232.6" cy="220.4" r="1.3" fill="url(#sf)" opacity="0.26"/>
<circle cx="300.2" cy="107.8" r="2.1" fill="url(#sf)" opacity="0.21"/>
<circle cx="290.1" cy="207.8" r="1.8" fill="url(#sf)" opacity="0.29"/>
<circle cx="231.0" cy="203.2" r="1.8" fill="url(#sf)" opacity="0.28"/>
<circle cx="292.7" cy="274.6" r="2.2" fill="url(#sf)" opacity="0.30"/>
<circle cx="263.9" cy="212.0" r="1.8" fill="url(#sf)" opacity="0.30"/>
<circle cx="248.5" cy="241.4" r="1.5" fill="url(#sf)" opacity="0.43"/>
<circle cx="262.1" cy="174.0" r="2.1" fill="url(#sf)" opacity="0.36"/>
<circle cx="303.0" cy="185.8" r="1.7" fill="url(#sf)" opacity="0.46"/>
<circle cx="256.9" cy="205.9" r="1.9" fill="url(#sf)" opacity="0.18"/>
<circle cx="355.5" cy="242.7" r="1.9" fill="url(#sf)" opacity="0.19"/>
<circle cx="146.6" cy="151.3" r="2.1" fill="url(#sf)" opacity="0.28"/>
<circle cx="243.1" cy="150.3" r="1.5" fill="url(#sf)" opacity="0.23"/>
<circle cx="322.3" cy="270.2" r="2.2" fill="url(#sf)" opacity="0.20"/>
<circle cx="282.3" cy="209.8" r="2.1" fill="url(#sf)" opacity="0.48"/>
<circle cx="250.0" cy="171.4" r="1.5" fill="url(#sf)" opacity="0.47"/>
<circle cx="301.4" cy="248.5" r="1.3" fill="url(#sf)" opacity="0.40"/>
<circle cx="274.7" cy="190.8" r="1.5" fill="url(#sf)" opacity="0.24"/>
<circle cx="249.1" cy="243.3" r="1.8" fill="url(#sf)" opacity="0.21"/>
<circle cx="213.3" cy="310.5" r="2.1" fill="url(#sf)" opacity="0.18"/>
<circle cx="345.5" cy="191.0" r="1.6" fill="url(#sf)" opacity="0.15"/>
<circle cx="248.2" cy="175.4" r="1.4" fill="url(#sf)" opacity="0.35"/>
<circle cx="253.4" cy="204.1" r="2.0" fill="url(#sf)" opacity="0.31"/>
<circle cx="311.8" cy="238.2" r="2.1" fill="url(#sf)" opacity="0.20"/>
<circle cx="401.4" cy="197.4" r="2.2" fill="url(#sf)" opacity="0.29"/>
<circle cx="253.0" cy="223.0" r="2.0" fill="url(#sf)" opacity="0.33"/>
<circle cx="384.8" cy="277.3" r="1.7" fill="url(#sf)" opacity="0.39"/>
<circle cx="221.9" cy="188.3" r="1.3" fill="url(#sf)" opacity="0.21"/>
<circle cx="289.4" cy="184.2" r="2.1" fill="url(#sf)" opacity="0.24"/>
<circle cx="399.9" cy="227.7" r="1.9" fill="url(#sf)" opacity="0.42"/>
<circle cx="297.4" cy="190.2" r="1.9" fill="url(#sf)" opacity="0.18"/>
<circle cx="240.5" cy="209.9" r="1.5" fill="url(#sf)" opacity="0.41"/>
<circle cx="273.8" cy="180.0" r="1.5" fill="url(#sf)" opacity="0.18"/>
<circle cx="306.0" cy="226.1" r="1.8" fill="url(#sf)" opacity="0.43"/>
<circle cx="222.0" cy="212.2" r="1.2" fill="url(#sf)" opacity="0.33"/>
<circle cx="259.1" cy="187.8" r="1.3" fill="url(#sf)" opacity="0.36"/>
<circle cx="246.9" cy="222.5" r="1.9" fill="url(#sf)" opacity="0.22"/>
<circle cx="288.0" cy="193.2" r="1.6" fill="url(#sf)" opacity="0.45"/>
<circle cx="168.7" cy="213.1" r="1.4" fill="url(#sf)" opacity="0.16"/>
<circle cx="345.5" cy="270.0" r="1.7" fill="url(#sf)" opacity="0.29"/>
<circle cx="251.7" cy="204.1" r="1.4" fill="url(#sf)" opacity="0.34"/>
<circle cx="241.4" cy="231.0" r="1.4" fill="url(#sf)" opacity="0.30"/>
<circle cx="284.5" cy="216.8" r="1.5" fill="url(#sf)" opacity="0.46"/>
<circle cx="300.2" cy="174.9" r="1.2" fill="url(#sf)" opacity="0.48"/>
<circle cx="278.9" cy="162.3" r="1.8" fill="url(#sf)" opacity="0.39"/>
<circle cx="268.8" cy="176.6" r="1.4" fill="url(#sf)" opacity="0.25"/>
<circle cx="260.8" cy="207.0" r="1.8" fill="url(#sf)" opacity="0.26"/>
<circle cx="363.2" cy="255.9" r="1.8" fill="url(#sf)" opacity="0.20"/>
<circle cx="279.0" cy="153.5" r="2.0" fill="url(#sf)" opacity="0.18"/>
<circle cx="248.6" cy="186.1" r="2.3" fill="url(#sf)" opacity="0.17"/>
<circle cx="250.8" cy="153.5" r="2.1" fill="url(#sf)" opacity="0.28"/>
<circle cx="191.1" cy="219.6" r="2.2" fill="url(#sf)" opacity="0.14"/>
<circle cx="139.9" cy="280.2" r="1.6" fill="url(#sf)" opacity="0.16"/>
<circle cx="266.3" cy="175.9" r="1.9" fill="url(#sf)" opacity="0.21"/>
<circle cx="288.2" cy="224.1" r="1.4" fill="url(#sf)" opacity="0.23"/>
<circle cx="298.2" cy="196.1" r="2.3" fill="url(#sf)" opacity="0.43"/>
<circle cx="229.8" cy="201.3" r="2.1" fill="url(#sf)" opacity="0.47"/>
<circle cx="224.5" cy="149.4" r="1.4" fill="url(#sf)" opacity="0.37"/>
<circle cx="289.4" cy="112.8" r="1.3" fill="url(#sf)" opacity="0.34"/>
<circle cx="284.9" cy="226.8" r="2.3" fill="url(#sf)" opacity="0.39"/>
<circle cx="312.9" cy="250.6" r="2.1" fill="url(#sf)" opacity="0.48"/>
<circle cx="265.1" cy="82.6" r="2.1" fill="url(#sf)" opacity="0.37"/>
<circle cx="224.9" cy="219.5" r="2.1" fill="url(#sf)" opacity="0.43"/>
<circle cx="238.6" cy="295.7" r="2.3" fill="url(#sf)" opacity="0.29"/>
<circle cx="387.9" cy="306.7" r="2.3" fill="url(#sf)" opacity="0.36"/>
<circle cx="282.1" cy="179.1" r="1.5" fill="url(#sf)" opacity="0.23"/>
<circle cx="271.9" cy="238.0" r="1.7" fill="url(#sf)" opacity="0.47"/>
<circle cx="254.5" cy="144.5" r="1.6" fill="url(#sf)" opacity="0.43"/>
<circle cx="237.7" cy="131.3" r="2.2" fill="url(#sf)" opacity="0.37"/>
<circle cx="298.0" cy="218.4" r="1.9" fill="url(#sf)" opacity="0.44"/>
<circle cx="243.8" cy="183.7" r="2.1" fill="url(#sf)" opacity="0.43"/>
<circle cx="263.6" cy="201.0" r="1.2" fill="url(#sf)" opacity="0.20"/>
<circle cx="198.7" cy="239.9" r="1.9" fill="url(#sf)" opacity="0.27"/>
<circle cx="275.6" cy="229.8" r="1.6" fill="url(#sf)" opacity="0.45"/>
<circle cx="255.6" cy="249.4" r="1.3" fill="url(#sf)" opacity="0.25"/>
<circle cx="212.7" cy="222.0" r="1.9" fill="url(#sf)" opacity="0.43"/>
<circle cx="261.6" cy="184.5" r="1.2" fill="url(#sf)" opacity="0.44"/>
<circle cx="265.9" cy="221.8" r="2.3" fill="url(#sf)" opacity="0.28"/>
<circle cx="287.1" cy="185.5" r="1.9" fill="url(#sf)" opacity="0.46"/>
<circle cx="235.4" cy="200.7" r="2.3" fill="url(#sf)" opacity="0.33"/>
<circle cx="279.4" cy="181.6" r="1.4" fill="url(#sf)" opacity="0.34"/>
<circle cx="269.8" cy="202.6" r="2.2" fill="url(#sf)" opacity="0.31"/>
<circle cx="268.4" cy="280.3" r="1.6" fill="url(#sf)" opacity="0.17"/>
<circle cx="297.7" cy="166.7" r="1.8" fill="url(#sf)" opacity="0.29"/>
<circle cx="377.0" cy="115.3" r="1.9" fill="url(#sf)" opacity="0.16"/>
<circle cx="220.9" cy="218.1" r="2.3" fill="url(#sf)" opacity="0.28"/>
<circle cx="231.6" cy="160.1" r="1.6" fill="url(#sf)" opacity="0.34"/>
<circle cx="316.2" cy="169.3" r="1.7" fill="url(#sf)" opacity="0.28"/>
<circle cx="275.4" cy="189.5" r="2.0" fill="url(#sf)" opacity="0.35"/>
<circle cx="269.0" cy="163.8" r="2.2" fill="url(#sf)" opacity="0.41"/>
<circle cx="334.6" cy="215.3" r="1.6" fill="url(#sf)" opacity="0.21"/>
<circle cx="402.0" cy="92.4" r="1.4" fill="url(#sf)" opacity="0.31"/>
<circle cx="313.4" cy="214.1" r="1.6" fill="url(#sf)" opacity="0.41"/>
<circle cx="258.6" cy="252.4" r="2.0" fill="url(#sf)" opacity="0.26"/>
<circle cx="230.3" cy="221.5" r="2.3" fill="url(#sf)" opacity="0.38"/>
<circle cx="233.8" cy="130.3" r="1.6" fill="url(#sf)" opacity="0.41"/>
<circle cx="246.6" cy="143.6" r="1.5" fill="url(#sf)" opacity="0.22"/>
<circle cx="290.1" cy="159.4" r="2.1" fill="url(#sf)" opacity="0.28"/>
<circle cx="250.1" cy="198.7" r="2.2" fill="url(#sf)" opacity="0.22"/>
<circle cx="300.1" cy="258.1" r="1.5" fill="url(#sf)" opacity="0.18"/>
<circle cx="248.2" cy="219.3" r="2.3" fill="url(#sf)" opacity="0.49"/>
<circle cx="260.9" cy="220.7" r="2.2" fill="url(#sf)" opacity="0.23"/>
<circle cx="241.8" cy="211.6" r="1.3" fill="url(#sf)" opacity="0.25"/>
<circle cx="243.7" cy="222.6" r="2.3" fill="url(#sf)" opacity="0.25"/>
<circle cx="287.8" cy="188.4" r="1.7" fill="url(#sf)" opacity="0.44"/>
<circle cx="278.2" cy="149.1" r="1.5" fill="url(#sf)" opacity="0.21"/>
<circle cx="201.3" cy="213.4" r="1.8" fill="url(#sf)" opacity="0.39"/>
<circle cx="258.0" cy="267.6" r="1.6" fill="url(#sf)" opacity="0.47"/>
<circle cx="258.6" cy="242.0" r="1.9" fill="url(#sf)" opacity="0.25"/>
<circle cx="337.7" cy="218.9" r="2.1" fill="url(#sf)" opacity="0.30"/>
<circle cx="297.6" cy="189.2" r="1.5" fill="url(#sf)" opacity="0.24"/>
<circle cx="255.4" cy="196.4" r="2.0" fill="url(#sf)" opacity="0.39"/>
<circle cx="281.1" cy="168.3" r="1.3" fill="url(#sf)" opacity="0.26"/>
<circle cx="320.9" cy="189.7" r="1.9" fill="url(#sf)" opacity="0.40"/>
<circle cx="212.1" cy="244.9" r="2.2" fill="url(#sf)" opacity="0.35"/>
<circle cx="245.1" cy="219.5" r="2.1" fill="url(#sf)" opacity="0.28"/>
<circle cx="283.7" cy="185.1" r="1.8" fill="url(#sf)" opacity="0.34"/>
<circle cx="314.4" cy="168.1" r="1.3" fill="url(#sf)" opacity="0.28"/>
<circle cx="257.1" cy="207.7" r="1.8" fill="url(#sf)" opacity="0.45"/>
<circle cx="219.6" cy="174.4" r="1.6" fill="url(#sf)" opacity="0.36"/>
<circle cx="283.7" cy="178.7" r="2.1" fill="url(#sf)" opacity="0.45"/>
<circle cx="259.6" cy="183.4" r="2.0" fill="url(#sf)" opacity="0.33"/>
<circle cx="360.4" cy="133.0" r="2.0" fill="url(#sf)" opacity="0.37"/>
<circle cx="307.6" cy="163.6" r="1.3" fill="url(#sf)" opacity="0.40"/>
<circle cx="222.9" cy="161.5" r="1.5" fill="url(#sf)" opacity="0.18"/>
<circle cx="290.8" cy="156.8" r="1.5" fill="url(#sf)" opacity="0.23"/>
<circle cx="288.5" cy="213.8" r="1.9" fill="url(#sf)" opacity="0.49"/>
<circle cx="219.3" cy="260.7" r="2.0" fill="url(#sf)" opacity="0.16"/>
<circle cx="228.8" cy="278.8" r="1.2" fill="url(#sf)" opacity="0.32"/>
<circle cx="265.9" cy="219.1" r="1.3" fill="url(#sf)" opacity="0.31"/>
<circle cx="284.6" cy="158.8" r="1.2" fill="url(#sf)" opacity="0.44"/>
<circle cx="271.5" cy="217.3" r="1.9" fill="url(#sf)" opacity="0.28"/>
<circle cx="241.8" cy="188.2" r="1.4" fill="url(#sf)" opacity="0.43"/>
<circle cx="281.0" cy="181.3" r="2.1" fill="url(#sf)" opacity="0.34"/>
<circle cx="270.6" cy="190.6" r="1.2" fill="url(#sf)" opacity="0.33"/>
<circle cx="301.3" cy="214.2" r="1.9" fill="url(#sf)" opacity="0.41"/>
<circle cx="230.5" cy="228.4" r="1.8" fill="url(#sf)" opacity="0.36"/>
<circle cx="284.9" cy="183.0" r="2.3" fill="url(#sf)" opacity="0.43"/>
<circle cx="298.3" cy="198.0" r="1.3" fill="url(#sf)" opacity="0.32"/>
<circle cx="251.1" cy="205.9" r="2.0" fill="url(#sf)" opacity="0.40"/>
<circle cx="248.5" cy="231.9" r="1.4" fill="url(#sf)" opacity="0.30"/>
<circle cx="278.1" cy="225.9" r="2.0" fill="url(#sf)" opacity="0.34"/>
<circle cx="280.5" cy="234.9" r="2.0" fill="url(#sf)" opacity="0.23"/>
<circle cx="244.6" cy="191.0" r="2.0" fill="url(#sf)" opacity="0.49"/>
<circle cx="332.3" cy="179.2" r="2.2" fill="url(#sf)" opacity="0.41"/>
<circle cx="326.6" cy="224.6" r="1.4" fill="url(#sf)" opacity="0.16"/>
<circle cx="251.9" cy="105.4" r="1.9" fill="url(#sf)" opacity="0.21"/>
<circle cx="284.9" cy="227.2" r="1.9" fill="url(#sf)" opacity="0.50"/>
<circle cx="296.0" cy="208.4" r="1.4" fill="url(#sf)" opacity="0.28"/>
<circle cx="307.2" cy="92.9" r="1.7" fill="url(#sf)" opacity="0.17"/>
<circle cx="278.3" cy="214.3" r="2.1" fill="url(#sf)" opacity="0.32"/>
<circle cx="302.9" cy="82.5" r="1.7" fill="url(#sf)" opacity="0.37"/>
<circle cx="282.8" cy="212.0" r="1.8" fill="url(#sf)" opacity="0.33"/>
<circle cx="268.5" cy="223.5" r="1.2" fill="url(#sf)" opacity="0.47"/>
<circle cx="326.5" cy="180.0" r="2.3" fill="url(#sf)" opacity="0.31"/>
<circle cx="220.6" cy="243.5" r="2.1" fill="url(#sf)" opacity="0.45"/>
<circle cx="287.2" cy="202.1" r="1.4" fill="url(#sf)" opacity="0.36"/>
<circle cx="301.2" cy="202.5" r="2.1" fill="url(#sf)" opacity="0.43"/>
<circle cx="305.3" cy="210.8" r="2.2" fill="url(#sf)" opacity="0.34"/>
<circle cx="262.5" cy="213.2" r="1.9" fill="url(#sf)" opacity="0.46"/>
<circle cx="243.6" cy="170.4" r="1.4" fill="url(#sf)" opacity="0.24"/>
<circle cx="180.9" cy="280.4" r="1.3" fill="url(#sf)" opacity="0.31"/>
<circle cx="274.4" cy="217.7" r="1.7" fill="url(#sf)" opacity="0.36"/>
<circle cx="254.8" cy="150.2" r="1.7" fill="url(#sf)" opacity="0.18"/>
<circle cx="328.5" cy="221.6" r="1.7" fill="url(#sf)" opacity="0.30"/>
<circle cx="256.1" cy="145.7" r="1.5" fill="url(#sf)" opacity="0.38"/>
<circle cx="210.9" cy="211.0" r="1.4" fill="url(#sf)" opacity="0.47"/>
<circle cx="313.7" cy="219.3" r="1.5" fill="url(#sf)" opacity="0.50"/>
<circle cx="250.1" cy="215.6" r="2.1" fill="url(#sf)" opacity="0.44"/>
<circle cx="266.1" cy="148.7" r="1.2" fill="url(#sf)" opacity="0.19"/>
<circle cx="344.6" cy="219.1" r="1.3" fill="url(#sf)" opacity="0.21"/>
<circle cx="295.4" cy="338.0" r="1.9" fill="url(#sf)" opacity="0.40"/>
<circle cx="314.7" cy="175.1" r="1.5" fill="url(#sf)" opacity="0.21"/>
<circle cx="269.2" cy="192.2" r="1.3" fill="url(#sf)" opacity="0.49"/>
<circle cx="292.4" cy="257.1" r="2.1" fill="url(#sf)" opacity="0.22"/>
<circle cx="301.3" cy="226.1" r="2.1" fill="url(#sf)" opacity="0.46"/>
<circle cx="395.4" cy="202.4" r="2.1" fill="url(#sf)" opacity="0.30"/>
<circle cx="186.0" cy="199.3" r="1.9" fill="url(#sf)" opacity="0.31"/>
<circle cx="337.1" cy="236.8" r="1.3" fill="url(#sf)" opacity="0.29"/>
<circle cx="246.9" cy="217.1" r="1.2" fill="url(#sf)" opacity="0.41"/>
<circle cx="273.3" cy="192.4" r="2.1" fill="url(#sf)" opacity="0.32"/>
<circle cx="258.4" cy="186.3" r="1.4" fill="url(#sf)" opacity="0.31"/>
<circle cx="285.6" cy="198.1" r="1.8" fill="url(#sf)" opacity="0.28"/>
<circle cx="266.8" cy="184.9" r="2.1" fill="url(#sf)" opacity="0.45"/>
<circle cx="257.8" cy="212.7" r="1.5" fill="url(#sf)" opacity="0.42"/>
<circle cx="253.6" cy="188.6" r="2.3" fill="url(#sf)" opacity="0.42"/>
<circle cx="274.2" cy="203.3" r="1.3" fill="url(#sf)" opacity="0.40"/>
<circle cx="220.6" cy="194.5" r="1.7" fill="url(#sf)" opacity="0.30"/>
<circle cx="239.2" cy="160.6" r="2.2" fill="url(#sf)" opacity="0.41"/>
<circle cx="334.2" cy="160.7" r="2.1" fill="url(#sf)" opacity="0.34"/>
<circle cx="264.5" cy="191.3" r="2.1" fill="url(#sf)" opacity="0.31"/>
<circle cx="312.8" cy="293.8" r="2.2" fill="url(#sf)" opacity="0.26"/>
<circle cx="267.8" cy="261.3" r="1.5" fill="url(#sf)" opacity="0.28"/>
<circle cx="293.1" cy="217.0" r="1.7" fill="url(#sf)" opacity="0.49"/>
<circle cx="318.2" cy="178.2" r="2.0" fill="url(#sf)" opacity="0.44"/>
<circle cx="258.5" cy="267.7" r="1.5" fill="url(#sf)" opacity="0.30"/>
<circle cx="269.9" cy="209.4" r="2.2" fill="url(#sf)" opacity="0.47"/>
<circle cx="272.6" cy="171.3" r="2.1" fill="url(#sf)" opacity="0.46"/>
<circle cx="194.2" cy="185.4" r="1.3" fill="url(#sf)" opacity="0.37"/>
<circle cx="248.8" cy="180.1" r="1.6" fill="url(#sf)" opacity="0.34"/>
<circle cx="249.1" cy="196.7" r="1.9" fill="url(#sf)" opacity="0.34"/>
<circle cx="144.8" cy="282.1" r="2.2" fill="url(#sf)" opacity="0.34"/>
<circle cx="272.4" cy="215.7" r="1.5" fill="url(#sf)" opacity="0.47"/>
<circle cx="268.3" cy="208.2" r="2.0" fill="url(#sf)" opacity="0.50"/>
<circle cx="249.4" cy="208.6" r="2.0" fill="url(#sf)" opacity="0.39"/>
<circle cx="270.1" cy="133.9" r="1.5" fill="url(#sf)" opacity="0.25"/>
<circle cx="265.2" cy="191.4" r="1.4" fill="url(#sf)" opacity="0.25"/>
<circle cx="224.2" cy="171.9" r="1.9" fill="url(#sf)" opacity="0.36"/>
<circle cx="249.1" cy="256.4" r="1.3" fill="url(#sf)" opacity="0.18"/>
<circle cx="263.8" cy="206.6" r="1.4" fill="url(#sf)" opacity="0.20"/>
<circle cx="308.1" cy="193.0" r="2.0" fill="url(#sf)" opacity="0.25"/>
<circle cx="299.9" cy="264.4" r="1.3" fill="url(#sf)" opacity="0.22"/>
<circle cx="256.1" cy="168.7" r="1.7" fill="url(#sf)" opacity="0.41"/>
<circle cx="283.3" cy="194.0" r="1.6" fill="url(#sf)" opacity="0.44"/>
<circle cx="273.7" cy="191.6" r="1.4" fill="url(#sf)" opacity="0.45"/>
<circle cx="231.5" cy="132.0" r="1.5" fill="url(#sf)" opacity="0.14"/>
<circle cx="286.8" cy="188.3" r="1.4" fill="url(#sf)" opacity="0.38"/>
<circle cx="243.7" cy="160.3" r="1.4" fill="url(#sf)" opacity="0.21"/>
<circle cx="284.7" cy="198.9" r="1.6" fill="url(#sf)" opacity="0.38"/>
<circle cx="276.5" cy="245.9" r="1.3" fill="url(#sf)" opacity="0.17"/>
<circle cx="332.1" cy="268.1" r="2.3" fill="url(#sf)" opacity="0.24"/>
<circle cx="309.5" cy="248.8" r="2.1" fill="url(#sf)" opacity="0.25"/>
<circle cx="237.4" cy="196.0" r="1.3" fill="url(#sf)" opacity="0.24"/>
<circle cx="252.0" cy="275.2" r="1.6" fill="url(#sf)" opacity="0.36"/>
<circle cx="277.0" cy="222.8" r="1.4" fill="url(#sf)" opacity="0.29"/>
<circle cx="248.8" cy="176.0" r="1.7" fill="url(#sf)" opacity="0.46"/>
<circle cx="262.4" cy="190.0" r="2.1" fill="url(#sf)" opacity="0.24"/>
<circle cx="259.5" cy="204.4" r="1.3" fill="url(#sf)" opacity="0.32"/>
<circle cx="319.9" cy="234.7" r="1.3" fill="url(#sf)" opacity="0.32"/>
<circle cx="271.3" cy="221.3" r="1.7" fill="url(#sf)" opacity="0.20"/>
<circle cx="259.9" cy="211.2" r="1.7" fill="url(#sf)" opacity="0.48"/>
<circle cx="309.1" cy="220.0" r="1.4" fill="url(#sf)" opacity="0.41"/>
<circle cx="299.9" cy="167.6" r="2.3" fill="url(#sf)" opacity="0.45"/>
<circle cx="284.7" cy="194.7" r="1.8" fill="url(#sf)" opacity="0.24"/>
<circle cx="282.4" cy="185.1" r="1.4" fill="url(#sf)" opacity="0.19"/>
<circle cx="291.9" cy="188.7" r="1.7" fill="url(#sf)" opacity="0.41"/>
<circle cx="255.0" cy="204.8" r="1.5" fill="url(#sf)" opacity="0.23"/>
<circle cx="233.3" cy="242.9" r="1.3" fill="url(#sf)" opacity="0.49"/>
<circle cx="285.5" cy="236.0" r="1.2" fill="url(#sf)" opacity="0.38"/>
<circle cx="309.8" cy="207.0" r="1.7" fill="url(#sf)" opacity="0.41"/>
<circle cx="273.1" cy="243.6" r="1.7" fill="url(#sf)" opacity="0.37"/>
<circle cx="301.8" cy="243.2" r="2.1" fill="url(#sf)" opacity="0.48"/>
<circle cx="309.9" cy="149.2" r="1.6" fill="url(#sf)" opacity="0.47"/>
<circle cx="271.9" cy="221.7" r="1.9" fill="url(#sf)" opacity="0.47"/>
<circle cx="271.9" cy="215.2" r="1.2" fill="url(#sf)" opacity="0.31"/>
<circle cx="275.6" cy="218.2" r="2.0" fill="url(#sf)" opacity="0.36"/>
<circle cx="146.1" cy="287.4" r="1.9" fill="url(#sf)" opacity="0.14"/>
<circle cx="286.1" cy="363.2" r="1.7" fill="url(#sf)" opacity="0.28"/>
<circle cx="105.6" cy="208.7" r="2.3" fill="url(#sf)" opacity="0.32"/>
<circle cx="280.5" cy="180.5" r="1.4" fill="url(#sf)" opacity="0.50"/>
<circle cx="274.4" cy="237.6" r="2.3" fill="url(#sf)" opacity="0.27"/>
<circle cx="249.9" cy="229.1" r="1.9" fill="url(#sf)" opacity="0.17"/>
<circle cx="285.7" cy="228.0" r="2.1" fill="url(#sf)" opacity="0.16"/>
<circle cx="266.4" cy="249.9" r="1.7" fill="url(#sf)" opacity="0.35"/>
<circle cx="308.7" cy="247.4" r="1.5" fill="url(#sf)" opacity="0.20"/>
<circle cx="281.4" cy="215.3" r="1.8" fill="url(#sf)" opacity="0.36"/>
<circle cx="369.2" cy="238.1" r="1.5" fill="url(#sf)" opacity="0.18"/>
<circle cx="223.6" cy="214.5" r="1.6" fill="url(#sf)" opacity="0.46"/>
<circle cx="304.0" cy="158.2" r="2.3" fill="url(#sf)" opacity="0.25"/>
<circle cx="140.1" cy="284.8" r="1.3" fill="url(#sf)" opacity="0.40"/>
<circle cx="285.2" cy="202.4" r="1.5" fill="url(#sf)" opacity="0.26"/>
<circle cx="181.5" cy="248.5" r="1.8" fill="url(#sf)" opacity="0.38"/>
<circle cx="223.7" cy="135.6" r="1.8" fill="url(#sf)" opacity="0.17"/>
<circle cx="255.3" cy="179.8" r="1.8" fill="url(#sf)" opacity="0.43"/>
<circle cx="379.8" cy="173.9" r="1.4" fill="url(#sf)" opacity="0.16"/>
<circle cx="166.3" cy="152.1" r="1.4" fill="url(#sf)" opacity="0.34"/>
<circle cx="270.9" cy="226.0" r="1.6" fill="url(#sf)" opacity="0.34"/>
<circle cx="319.8" cy="225.9" r="2.0" fill="url(#sf)" opacity="0.37"/>
<circle cx="250.7" cy="166.7" r="2.1" fill="url(#sf)" opacity="0.16"/>
<circle cx="251.9" cy="165.8" r="2.0" fill="url(#sf)" opacity="0.38"/>
<circle cx="289.3" cy="195.1" r="2.1" fill="url(#sf)" opacity="0.24"/>
<circle cx="303.3" cy="191.3" r="1.4" fill="url(#sf)" opacity="0.30"/>
<circle cx="281.4" cy="314.9" r="2.0" fill="url(#sf)" opacity="0.24"/>
<circle cx="274.6" cy="145.7" r="1.3" fill="url(#sf)" opacity="0.24"/>
<circle cx="266.5" cy="223.7" r="1.2" fill="url(#sf)" opacity="0.21"/>
<circle cx="238.8" cy="216.9" r="1.3" fill="url(#sf)" opacity="0.36"/>
<circle cx="132.2" cy="128.9" r="1.6" fill="url(#sf)" opacity="0.34"/>
<circle cx="285.1" cy="232.8" r="1.7" fill="url(#sf)" opacity="0.17"/>
<circle cx="298.9" cy="248.7" r="1.6" fill="url(#sf)" opacity="0.49"/>
<circle cx="304.9" cy="140.1" r="1.9" fill="url(#sf)" opacity="0.32"/>
<circle cx="327.9" cy="187.9" r="1.4" fill="url(#sf)" opacity="0.42"/>
<circle cx="267.8" cy="228.6" r="2.1" fill="url(#sf)" opacity="0.36"/>
<circle cx="333.6" cy="135.9" r="1.8" fill="url(#sf)" opacity="0.19"/>
<circle cx="261.1" cy="198.9" r="2.0" fill="url(#sf)" opacity="0.25"/>
<circle cx="282.8" cy="201.0" r="1.4" fill="url(#sf)" opacity="0.40"/>
<circle cx="269.4" cy="205.5" r="1.5" fill="url(#sf)" opacity="0.40"/>
<circle cx="275.3" cy="206.3" r="2.2" fill="url(#sf)" opacity="0.49"/>
<circle cx="258.9" cy="217.2" r="1.8" fill="url(#sf)" opacity="0.27"/>
<circle cx="234.2" cy="205.2" r="1.5" fill="url(#sf)" opacity="0.18"/>
<circle cx="276.7" cy="213.5" r="1.3" fill="url(#sf)" opacity="0.37"/>
<circle cx="264.0" cy="259.8" r="2.1" fill="url(#sf)" opacity="0.41"/>
<circle cx="238.5" cy="202.2" r="1.4" fill="url(#sf)" opacity="0.48"/>
<circle cx="311.6" cy="214.9" r="1.4" fill="url(#sf)" opacity="0.40"/>
<circle cx="262.0" cy="168.4" r="1.5" fill="url(#sf)" opacity="0.43"/>
<circle cx="333.4" cy="244.1" r="1.8" fill="url(#sf)" opacity="0.19"/>
<circle cx="289.1" cy="143.2" r="2.1" fill="url(#sf)" opacity="0.24"/>
<circle cx="260.6" cy="187.1" r="1.8" fill="url(#sf)" opacity="0.21"/>
<circle cx="249.7" cy="189.7" r="1.3" fill="url(#sf)" opacity="0.38"/>
<circle cx="267.5" cy="225.2" r="1.7" fill="url(#sf)" opacity="0.34"/>
<circle cx="330.9" cy="212.8" r="2.0" fill="url(#sf)" opacity="0.24"/>
<circle cx="251.3" cy="179.5" r="2.0" fill="url(#sf)" opacity="0.37"/>
<circle cx="301.4" cy="312.0" r="1.5" fill="url(#sf)" opacity="0.33"/>
<circle cx="283.0" cy="222.1" r="1.4" fill="url(#sf)" opacity="0.42"/>
<circle cx="251.1" cy="118.1" r="2.3" fill="url(#sf)" opacity="0.37"/>
<circle cx="257.4" cy="226.7" r="2.0" fill="url(#sf)" opacity="0.18"/>
<circle cx="310.8" cy="226.9" r="1.3" fill="url(#sf)" opacity="0.33"/>
<circle cx="286.5" cy="192.5" r="2.2" fill="url(#sf)" opacity="0.32"/>
<circle cx="285.0" cy="215.8" r="1.8" fill="url(#sf)" opacity="0.34"/>
<circle cx="262.2" cy="169.8" r="1.8" fill="url(#sf)" opacity="0.42"/>
<circle cx="283.9" cy="207.7" r="1.6" fill="url(#sf)" opacity="0.32"/>
<circle cx="256.4" cy="178.6" r="1.4" fill="url(#sf)" opacity="0.27"/>
<circle cx="259.7" cy="162.9" r="2.0" fill="url(#sf)" opacity="0.29"/>
<circle cx="301.8" cy="184.4" r="2.2" fill="url(#sf)" opacity="0.37"/>
<circle cx="252.9" cy="205.2" r="1.9" fill="url(#sf)" opacity="0.25"/>
<circle cx="279.7" cy="199.3" r="2.2" fill="url(#sf)" opacity="0.20"/>
<circle cx="241.0" cy="174.7" r="1.5" fill="url(#sf)" opacity="0.18"/>
<circle cx="277.6" cy="133.6" r="1.7" fill="url(#sf)" opacity="0.19"/>
<circle cx="296.5" cy="219.2" r="2.3" fill="url(#sf)" opacity="0.18"/>
<circle cx="271.9" cy="173.5" r="1.3" fill="url(#sf)" opacity="0.20"/>
<circle cx="276.0" cy="212.7" r="1.8" fill="url(#sf)" opacity="0.44"/>
<circle cx="278.3" cy="218.9" r="2.0" fill="url(#sf)" opacity="0.30"/>
<circle cx="290.3" cy="221.7" r="1.5" fill="url(#sf)" opacity="0.49"/>
<circle cx="267.8" cy="218.0" r="2.0" fill="url(#sf)" opacity="0.46"/>
<circle cx="152.8" cy="220.6" r="2.3" fill="url(#sf)" opacity="0.31"/>
<circle cx="242.1" cy="206.5" r="2.0" fill="url(#sf)" opacity="0.41"/>
<circle cx="275.1" cy="217.7" r="2.3" fill="url(#sf)" opacity="0.20"/>
<circle cx="226.1" cy="269.0" r="1.5" fill="url(#sf)" opacity="0.21"/>
<circle cx="307.0" cy="198.3" r="1.4" fill="url(#sf)" opacity="0.45"/>
<circle cx="282.4" cy="226.4" r="2.0" fill="url(#sf)" opacity="0.28"/>
<circle cx="249.9" cy="211.2" r="2.1" fill="url(#sf)" opacity="0.45"/>
<circle cx="315.1" cy="203.6" r="2.0" fill="url(#sf)" opacity="0.37"/>
<circle cx="378.2" cy="166.6" r="1.6" fill="url(#sf)" opacity="0.38"/>
<circle cx="260.6" cy="282.3" r="1.6" fill="url(#sf)" opacity="0.24"/>
<circle cx="246.5" cy="222.0" r="1.3" fill="url(#sf)" opacity="0.24"/>
<circle cx="166.1" cy="265.3" r="1.9" fill="url(#sf)" opacity="0.39"/>
<circle cx="271.2" cy="269.0" r="2.2" fill="url(#sf)" opacity="0.43"/>
<circle cx="270.7" cy="136.8" r="2.1" fill="url(#sf)" opacity="0.25"/>
<circle cx="229.0" cy="237.7" r="2.1" fill="url(#sf)" opacity="0.21"/>
<circle cx="246.4" cy="237.8" r="2.1" fill="url(#sf)" opacity="0.28"/>
<circle cx="320.5" cy="127.5" r="2.2" fill="url(#sf)" opacity="0.18"/>
<circle cx="263.4" cy="51.9" r="1.9" fill="url(#sf)" opacity="0.32"/>
<circle cx="277.1" cy="191.8" r="1.8" fill="url(#sf)" opacity="0.31"/>
<circle cx="275.0" cy="171.1" r="2.1" fill="url(#sf)" opacity="0.46"/>
<circle cx="256.3" cy="220.1" r="1.5" fill="url(#sf)" opacity="0.19"/>
<circle cx="297.9" cy="205.4" r="2.1" fill="url(#sf)" opacity="0.24"/>
<circle cx="281.6" cy="206.4" r="2.0" fill="url(#sf)" opacity="0.23"/>
<circle cx="238.0" cy="222.5" r="2.1" fill="url(#sf)" opacity="0.48"/>
<circle cx="249.6" cy="179.5" r="2.2" fill="url(#sf)" opacity="0.32"/>
<circle cx="257.1" cy="86.5" r="1.5" fill="url(#sf)" opacity="0.39"/>
<circle cx="305.2" cy="229.2" r="1.8" fill="url(#sf)" opacity="0.44"/>
<circle cx="227.2" cy="204.8" r="1.7" fill="url(#sf)" opacity="0.46"/>
<circle cx="283.3" cy="254.2" r="1.6" fill="url(#sf)" opacity="0.28"/>
<circle cx="310.8" cy="242.5" r="2.2" fill="url(#sf)" opacity="0.17"/>
<circle cx="225.2" cy="220.3" r="2.0" fill="url(#sf)" opacity="0.31"/>
<circle cx="253.3" cy="198.3" r="2.1" fill="url(#sf)" opacity="0.43"/>
<circle cx="274.2" cy="231.3" r="2.0" fill="url(#sf)" opacity="0.43"/>
<circle cx="286.2" cy="184.9" r="2.3" fill="url(#sf)" opacity="0.31"/>
<circle cx="260.7" cy="169.0" r="2.2" fill="url(#sf)" opacity="0.23"/>
<circle cx="255.4" cy="225.2" r="2.0" fill="url(#sf)" opacity="0.22"/>
<circle cx="224.8" cy="200.5" r="1.9" fill="url(#sf)" opacity="0.21"/>
<circle cx="281.5" cy="157.2" r="1.4" fill="url(#sf)" opacity="0.47"/>
<circle cx="271.5" cy="156.3" r="2.2" fill="url(#sf)" opacity="0.28"/>
<circle cx="304.0" cy="329.1" r="1.2" fill="url(#sf)" opacity="0.28"/>
<circle cx="361.3" cy="133.8" r="2.3" fill="url(#sf)" opacity="0.28"/>
<circle cx="136.7" cy="148.3" r="1.4" fill="url(#sf)" opacity="0.32"/>
<circle cx="199.4" cy="236.6" r="1.9" fill="url(#sf)" opacity="0.21"/>
<circle cx="152.8" cy="154.5" r="1.6" fill="url(#sf)" opacity="0.24"/>
<circle cx="52.4" cy="4.1" r="1.5" fill="url(#sf)" opacity="0.31"/>
<circle cx="410.8" cy="88.0" r="1.4" fill="url(#sf)" opacity="0.25"/>
<circle cx="97.8" cy="220.8" r="1.9" fill="url(#sf)" opacity="0.17"/>
<circle cx="321.8" cy="263.6" r="1.8" fill="url(#sf)" opacity="0.31"/>
<circle cx="390.1" cy="100.9" r="1.9" fill="url(#sf)" opacity="0.36"/>
<circle cx="30.7" cy="344.6" r="1.6" fill="url(#sf)" opacity="0.14"/>
<circle cx="40.0" cy="291.2" r="1.7" fill="url(#sf)" opacity="0.16"/>
<circle cx="253.2" cy="233.8" r="2.0" fill="url(#sf)" opacity="0.21"/>
<circle cx="420.7" cy="91.0" r="1.4" fill="url(#sf)" opacity="0.16"/>
<circle cx="226.0" cy="226.3" r="1.4" fill="url(#sf)" opacity="0.16"/>
<circle cx="121.4" cy="32.8" r="1.4" fill="url(#sf)" opacity="0.20"/>
<circle cx="277.6" cy="68.6" r="1.6" fill="url(#sf)" opacity="0.23"/>
<circle cx="533.4" cy="178.5" r="2.0" fill="url(#sf)" opacity="0.24"/>
<circle cx="110.1" cy="216.8" r="1.3" fill="url(#sf)" opacity="0.16"/>
<circle cx="42.0" cy="256.5" r="2.0" fill="url(#sf)" opacity="0.22"/>
<circle cx="195.4" cy="156.3" r="1.5" fill="url(#sf)" opacity="0.30"/>
<circle cx="216.1" cy="57.3" r="1.9" fill="url(#sf)" opacity="0.27"/>
<circle cx="5.5" cy="310.3" r="1.8" fill="url(#sf)" opacity="0.21"/>
<circle cx="346.1" cy="336.0" r="1.5" fill="url(#sf)" opacity="0.23"/>
<circle cx="164.9" cy="203.1" r="1.7" fill="url(#sf)" opacity="0.31"/>
<circle cx="520.5" cy="54.7" r="1.5" fill="url(#sf)" opacity="0.34"/>
<circle cx="434.1" cy="216.1" r="1.7" fill="url(#sf)" opacity="0.21"/>
<circle cx="518.1" cy="201.4" r="1.5" fill="url(#sf)" opacity="0.17"/>
<circle cx="65.0" cy="327.7" r="1.8" fill="url(#sf)" opacity="0.13"/>
<circle cx="178.5" cy="176.1" r="1.6" fill="url(#sf)" opacity="0.21"/>
<circle cx="490.9" cy="129.0" r="1.6" fill="url(#sf)" opacity="0.36"/>
<circle cx="351.1" cy="175.1" r="1.5" fill="url(#sf)" opacity="0.22"/>
<circle cx="334.7" cy="287.2" r="1.4" fill="url(#sf)" opacity="0.22"/>
<circle cx="213.8" cy="133.7" r="1.9" fill="url(#sf)" opacity="0.26"/>
<circle cx="152.7" cy="122.6" r="1.9" fill="url(#sf)" opacity="0.16"/>
<circle cx="378.9" cy="9.9" r="1.4" fill="url(#sf)" opacity="0.14"/>
<circle cx="442.0" cy="55.3" r="1.4" fill="url(#sf)" opacity="0.13"/>
<circle cx="146.1" cy="268.2" r="1.8" fill="url(#sf)" opacity="0.36"/>
<circle cx="519.2" cy="201.9" r="1.9" fill="url(#sf)" opacity="0.14"/>
<circle cx="507.3" cy="159.5" r="1.4" fill="url(#sf)" opacity="0.31"/>
<circle cx="471.0" cy="142.0" r="1.3" fill="url(#sf)" opacity="0.35"/>
<circle cx="413.6" cy="218.6" r="2.0" fill="url(#sf)" opacity="0.13"/>
<circle cx="32.6" cy="47.1" r="1.2" fill="url(#sf)" opacity="0.30"/>
<circle cx="346.2" cy="42.8" r="1.3" fill="url(#sf)" opacity="0.17"/>
<circle cx="334.8" cy="246.0" r="2.0" fill="url(#sf)" opacity="0.21"/>
<circle cx="536.7" cy="159.7" r="1.5" fill="url(#sf)" opacity="0.19"/>
<circle cx="129.1" cy="355.7" r="2.0" fill="url(#sf)" opacity="0.30"/>
<circle cx="97.6" cy="67.3" r="1.3" fill="url(#sf)" opacity="0.21"/>
<circle cx="404.6" cy="23.4" r="1.6" fill="url(#sf)" opacity="0.30"/>
<circle cx="20.3" cy="161.5" r="1.8" fill="url(#sf)" opacity="0.27"/>
<circle cx="248.7" cy="321.9" r="1.7" fill="url(#sf)" opacity="0.21"/>
<circle cx="218.3" cy="344.3" r="1.9" fill="url(#sf)" opacity="0.36"/>
<circle cx="308.3" cy="53.7" r="1.3" fill="url(#sf)" opacity="0.22"/>
<circle cx="379.2" cy="3.7" r="1.8" fill="url(#sf)" opacity="0.32"/>
<circle cx="283.2" cy="4.0" r="1.8" fill="url(#sf)" opacity="0.23"/>
<circle cx="367.6" cy="208.8" r="1.8" fill="url(#sf)" opacity="0.23"/>
<circle cx="526.3" cy="348.8" r="1.9" fill="url(#sf)" opacity="0.28"/>
<circle cx="174.8" cy="138.7" r="1.4" fill="url(#sf)" opacity="0.35"/>
<circle cx="434.7" cy="288.0" r="1.9" fill="url(#sf)" opacity="0.38"/>
<circle cx="377.8" cy="117.5" r="1.8" fill="url(#sf)" opacity="0.19"/>
<circle cx="335.7" cy="59.5" r="1.9" fill="url(#sf)" opacity="0.25"/>
<circle cx="152.3" cy="336.9" r="1.3" fill="url(#sf)" opacity="0.36"/>
<circle cx="415.4" cy="56.1" r="1.8" fill="url(#sf)" opacity="0.27"/>
<circle cx="497.5" cy="214.8" r="1.5" fill="url(#sf)" opacity="0.36"/>
<circle cx="49.7" cy="284.0" r="1.3" fill="url(#sf)" opacity="0.19"/>
<circle cx="64.1" cy="318.2" r="1.6" fill="url(#sf)" opacity="0.31"/>
<circle cx="142.2" cy="267.0" r="1.7" fill="url(#sf)" opacity="0.15"/>
<circle cx="271.7" cy="263.9" r="1.4" fill="url(#sf)" opacity="0.29"/>
<circle cx="153.8" cy="136.5" r="1.9" fill="url(#sf)" opacity="0.37"/>
<circle cx="547.1" cy="156.9" r="1.7" fill="url(#sf)" opacity="0.33"/>
<circle cx="416.3" cy="167.6" r="1.9" fill="url(#sf)" opacity="0.22"/>
<circle cx="520.9" cy="173.6" r="1.3" fill="url(#sf)" opacity="0.31"/>
<circle cx="81.1" cy="248.6" r="1.2" fill="url(#sf)" opacity="0.38"/>
<circle cx="297.5" cy="270.7" r="1.3" fill="url(#sf)" opacity="0.29"/>
<circle cx="207.7" cy="92.4" r="1.9" fill="url(#sf)" opacity="0.13"/>
<circle cx="263.0" cy="33.5" r="1.9" fill="url(#sf)" opacity="0.35"/>
<circle cx="20.8" cy="170.6" r="1.6" fill="url(#sf)" opacity="0.31"/>
<circle cx="400.3" cy="126.6" r="1.9" fill="url(#sf)" opacity="0.17"/>
<circle cx="76.6" cy="297.7" r="1.3" fill="url(#sf)" opacity="0.17"/>
<circle cx="275.2" cy="124.1" r="1.3" fill="url(#sf)" opacity="0.36"/>
<circle cx="260.8" cy="287.2" r="1.4" fill="url(#sf)" opacity="0.36"/>
<circle cx="122.8" cy="330.9" r="1.7" fill="url(#sf)" opacity="0.37"/>
<circle cx="423.2" cy="230.9" r="1.6" fill="url(#sf)" opacity="0.34"/>
<circle cx="244.3" cy="37.7" r="1.9" fill="url(#sf)" opacity="0.33"/>
<circle cx="374.5" cy="272.3" r="1.4" fill="url(#sf)" opacity="0.24"/>
<circle cx="451.5" cy="351.1" r="1.9" fill="url(#sf)" opacity="0.16"/>
<circle cx="375.5" cy="203.1" r="1.5" fill="url(#sf)" opacity="0.16"/>
<circle cx="76.9" cy="172.7" r="1.6" fill="url(#sf)" opacity="0.19"/>
<circle cx="202.8" cy="203.1" r="1.8" fill="url(#sf)" opacity="0.27"/>
<circle cx="90.6" cy="323.6" r="1.5" fill="url(#sf)" opacity="0.37"/>
<circle cx="538.2" cy="52.9" r="1.7" fill="url(#sf)" opacity="0.37"/>
<circle cx="212.3" cy="200.7" r="1.5" fill="url(#sf)" opacity="0.13"/>
<circle cx="113.7" cy="47.0" r="1.4" fill="url(#sf)" opacity="0.28"/>
<circle cx="309.5" cy="346.1" r="1.7" fill="url(#sf)" opacity="0.21"/>
<circle cx="520.6" cy="232.1" r="1.6" fill="url(#sf)" opacity="0.34"/>
<circle cx="367.9" cy="132.8" r="1.7" fill="url(#sf)" opacity="0.20"/>
<circle cx="531.4" cy="90.6" r="2.0" fill="url(#sf)" opacity="0.14"/>
<circle cx="7.4" cy="202.7" r="1.4" fill="url(#sf)" opacity="0.25"/>
<circle cx="66.5" cy="305.7" r="1.7" fill="url(#sf)" opacity="0.30"/>
<circle cx="508.1" cy="362.0" r="1.7" fill="url(#sf)" opacity="0.31"/>
<circle cx="3.0" cy="19.9" r="1.5" fill="url(#sf)" opacity="0.37"/>
<circle cx="173.0" cy="208.3" r="1.2" fill="url(#sf)" opacity="0.23"/>
<circle cx="495.0" cy="215.9" r="1.9" fill="url(#sf)" opacity="0.12"/>
<circle cx="112.7" cy="67.0" r="1.9" fill="url(#sf)" opacity="0.15"/>
<circle cx="511.1" cy="99.1" r="1.9" fill="url(#sf)" opacity="0.25"/>
<circle cx="178.7" cy="352.7" r="1.5" fill="url(#sf)" opacity="0.30"/>
<circle cx="38.7" cy="303.4" r="2.0" fill="url(#sf)" opacity="0.15"/>
<circle cx="409.6" cy="100.1" r="1.3" fill="url(#sf)" opacity="0.21"/>
<circle cx="363.5" cy="348.0" r="2.0" fill="url(#sf)" opacity="0.38"/>
<circle cx="342.4" cy="239.1" r="1.3" fill="url(#sf)" opacity="0.31"/>
<circle cx="303.1" cy="132.3" r="1.9" fill="url(#sf)" opacity="0.19"/>
<circle cx="79.4" cy="59.4" r="1.3" fill="url(#sf)" opacity="0.27"/>
<circle cx="439.4" cy="60.1" r="1.6" fill="url(#sf)" opacity="0.27"/>
<circle cx="308.1" cy="151.8" r="1.6" fill="url(#sf)" opacity="0.12"/>
<circle cx="33.7" cy="155.4" r="1.4" fill="url(#sf)" opacity="0.32"/>
<circle cx="134.1" cy="301.0" r="1.4" fill="url(#sf)" opacity="0.14"/>
<circle cx="262.8" cy="142.6" r="1.5" fill="url(#sf)" opacity="0.32"/>
<circle cx="123.4" cy="245.1" r="1.9" fill="url(#sf)" opacity="0.24"/>
<circle cx="276.8" cy="337.2" r="1.7" fill="url(#sf)" opacity="0.17"/>
<circle cx="40.0" cy="31.8" r="1.5" fill="url(#sf)" opacity="0.14"/>
<circle cx="356.4" cy="155.7" r="1.4" fill="url(#sf)" opacity="0.25"/>
<circle cx="513.6" cy="90.7" r="1.3" fill="url(#sf)" opacity="0.20"/>
<circle cx="179.1" cy="332.2" r="1.8" fill="url(#sf)" opacity="0.23"/>
<circle cx="92.6" cy="18.5" r="1.3" fill="url(#sf)" opacity="0.34"/>
<circle cx="356.0" cy="58.8" r="1.7" fill="url(#sf)" opacity="0.14"/>
<circle cx="278.9" cy="123.7" r="1.3" fill="url(#sf)" opacity="0.31"/>
<circle cx="393.5" cy="187.3" r="1.3" fill="url(#sf)" opacity="0.29"/>
<circle cx="238.7" cy="242.0" r="1.3" fill="url(#sf)" opacity="0.35"/>
<circle cx="3.9" cy="82.8" r="1.5" fill="url(#sf)" opacity="0.17"/>
<circle cx="50.0" cy="251.5" r="2.0" fill="url(#sf)" opacity="0.21"/>
<circle cx="147.4" cy="245.4" r="1.4" fill="url(#sf)" opacity="0.22"/>
<circle cx="378.0" cy="158.3" r="1.3" fill="url(#sf)" opacity="0.14"/>
<circle cx="298.6" cy="361.5" r="1.9" fill="url(#sf)" opacity="0.15"/>
<circle cx="276.4" cy="179.3" r="1.4" fill="url(#sf)" opacity="0.29"/>
<circle cx="272.7" cy="295.5" r="1.4" fill="url(#sf)" opacity="0.36"/>
<circle cx="446.9" cy="173.8" r="1.3" fill="url(#sf)" opacity="0.25"/>
<circle cx="71.4" cy="250.8" r="1.8" fill="url(#sf)" opacity="0.27"/>
<circle cx="535.3" cy="18.4" r="1.8" fill="url(#sf)" opacity="0.33"/>
<circle cx="63.7" cy="118.9" r="1.2" fill="url(#sf)" opacity="0.27"/>
<circle cx="396.9" cy="128.3" r="1.8" fill="url(#sf)" opacity="0.22"/>
<circle cx="391.0" cy="102.5" r="2.0" fill="url(#sf)" opacity="0.23"/>
<circle cx="4.0" cy="35.2" r="1.8" fill="url(#sf)" opacity="0.34"/>
<circle cx="349.8" cy="58.4" r="1.9" fill="url(#sf)" opacity="0.31"/>
<circle cx="64.9" cy="140.1" r="1.7" fill="url(#sf)" opacity="0.12"/>
<circle cx="25.1" cy="130.3" r="1.9" fill="url(#sf)" opacity="0.38"/>
<circle cx="175.9" cy="331.8" r="1.8" fill="url(#sf)" opacity="0.34"/>
<circle cx="323.3" cy="353.8" r="1.7" fill="url(#sf)" opacity="0.37"/>
<circle cx="311.1" cy="73.3" r="1.6" fill="url(#sf)" opacity="0.25"/>
<circle cx="186.3" cy="137.6" r="1.6" fill="url(#sf)" opacity="0.27"/>
<circle cx="123.6" cy="102.7" r="1.6" fill="url(#sf)" opacity="0.25"/>
<circle cx="230.7" cy="243.0" r="1.3" fill="url(#sf)" opacity="0.26"/>
<circle cx="152.6" cy="281.5" r="1.8" fill="url(#sf)" opacity="0.32"/>
<circle cx="284.6" cy="92.3" r="1.9" fill="url(#sf)" opacity="0.25"/>
<circle cx="206.9" cy="107.4" r="1.5" fill="url(#sf)" opacity="0.30"/>
<circle cx="449.1" cy="177.1" r="1.8" fill="url(#sf)" opacity="0.18"/>
<circle cx="248.9" cy="131.9" r="1.4" fill="url(#sf)" opacity="0.21"/>
<circle cx="414.2" cy="268.1" r="1.4" fill="url(#sf)" opacity="0.18"/>
<circle cx="430.4" cy="239.6" r="1.7" fill="url(#sf)" opacity="0.29"/>
<circle cx="380.8" cy="101.0" r="1.2" fill="url(#sf)" opacity="0.21"/>
<circle cx="19.7" cy="351.1" r="1.6" fill="url(#sf)" opacity="0.29"/>
<circle cx="529.9" cy="293.9" r="1.4" fill="url(#sf)" opacity="0.21"/>
<circle cx="61.3" cy="290.7" r="1.8" fill="url(#sf)" opacity="0.25"/>
<circle cx="203.7" cy="99.9" r="1.6" fill="url(#sf)" opacity="0.31"/>
<circle cx="491.1" cy="310.0" r="1.9" fill="url(#sf)" opacity="0.23"/>
<circle cx="232.1" cy="116.0" r="2.0" fill="url(#sf)" opacity="0.17"/>
<circle cx="88.2" cy="104.0" r="1.9" fill="url(#sf)" opacity="0.34"/>
<circle cx="183.1" cy="311.1" r="1.9" fill="url(#sf)" opacity="0.23"/>
<circle cx="107.0" cy="282.4" r="1.5" fill="url(#sf)" opacity="0.15"/>
<circle cx="495.1" cy="161.5" r="1.5" fill="url(#sf)" opacity="0.27"/>
<circle cx="141.4" cy="9.3" r="1.5" fill="url(#sf)" opacity="0.22"/>
<circle cx="8.1" cy="136.9" r="1.8" fill="url(#sf)" opacity="0.21"/>
<circle cx="373.2" cy="228.7" r="1.4" fill="url(#sf)" opacity="0.13"/>
<circle cx="370.3" cy="223.7" r="1.4" fill="url(#sf)" opacity="0.17"/>
<circle cx="469.2" cy="332.0" r="1.4" fill="url(#sf)" opacity="0.27"/>
<circle cx="62.2" cy="30.5" r="2.2" fill="url(#st)" opacity="0.78"/>
<circle cx="58.3" cy="24.9" r="1.7" fill="url(#st)" opacity="0.50"/>
<circle cx="82.6" cy="25.4" r="1.9" fill="url(#st)" opacity="0.62"/>
<circle cx="92.3" cy="31.3" r="1.7" fill="url(#st)" opacity="0.50"/>
<circle cx="96.6" cy="29.6" r="1.7" fill="url(#st)" opacity="0.50"/>
<circle cx="134.9" cy="34.7" r="1.7" fill="url(#st)" opacity="0.50"/>
<circle cx="141.3" cy="59.3" r="2.8" fill="url(#st)" opacity="1.00"/>
<circle cx="145.0" cy="84.5" r="2.8" fill="url(#st)" opacity="1.00"/>
<circle cx="167.1" cy="44.5" r="1.7" fill="url(#st)" opacity="0.50"/>
<circle cx="21.6" cy="87.3" r="2.2" fill="url(#st)" opacity="0.78"/>
<circle cx="21.1" cy="93.3" r="1.7" fill="url(#st)" opacity="0.50"/>
<circle cx="28.9" cy="118.6" r="2.8" fill="url(#st)" opacity="1.00"/>
<circle cx="19.1" cy="151.6" r="2.2" fill="url(#st)" opacity="0.78"/>
<circle cx="21.1" cy="159.1" r="1.9" fill="url(#st)" opacity="0.62"/>
<circle cx="40.1" cy="159.1" r="2.8" fill="url(#st)" opacity="1.00"/>
<circle cx="87.3" cy="104.6" r="1.9" fill="url(#st)" opacity="0.62"/>
<circle cx="110.6" cy="80.0" r="1.7" fill="url(#st)" opacity="0.50"/>
<circle cx="105.0" cy="73.8" r="1.7" fill="url(#st)" opacity="0.50"/>
<circle cx="83.5" cy="151.6" r="1.7" fill="url(#st)" opacity="0.50"/>
<circle cx="101.3" cy="152.1" r="1.9" fill="url(#st)" opacity="0.62"/>
<circle cx="101.3" cy="156.9" r="1.7" fill="url(#st)" opacity="0.50"/>
<circle cx="174.9" cy="163.3" r="2.5" fill="url(#st)" opacity="0.90"/>
<circle cx="177.7" cy="124.7" r="1.7" fill="url(#st)" opacity="0.50"/>
<circle cx="184.7" cy="129.8" r="1.9" fill="url(#st)" opacity="0.62"/>
<circle cx="165.1" cy="133.3" r="1.7" fill="url(#st)" opacity="0.50"/>
<circle cx="137.2" cy="111.6" r="1.7" fill="url(#st)" opacity="0.50"/>
<circle cx="39.3" cy="100.3" r="1.7" fill="url(#st)" opacity="0.50"/>
<circle cx="51.8" cy="41.7" r="1.7" fill="url(#st)" opacity="0.50"/>
<circle cx="192.3" cy="85.0" r="1.7" fill="url(#st)" opacity="0.50"/>
<circle cx="159.5" cy="79.3" r="1.7" fill="url(#st)" opacity="0.50"/>
<circle cx="128.8" cy="156.3" r="1.7" fill="url(#st)" opacity="0.50"/>
<circle cx="180.0" cy="150.7" r="1.7" fill="url(#st)" opacity="0.50"/>
<circle cx="392.1" cy="140.1" r="2.8" fill="url(#st)" opacity="1.00"/>
<circle cx="425.7" cy="142.6" r="2.8" fill="url(#st)" opacity="1.00"/>
<circle cx="446.7" cy="123.9" r="2.2" fill="url(#st)" opacity="0.78"/>
<circle cx="404.7" cy="68.3" r="1.9" fill="url(#st)" opacity="0.62"/>
<circle cx="425.3" cy="78.8" r="1.7" fill="url(#st)" opacity="0.50"/>
<circle cx="416.3" cy="47.3" r="1.7" fill="url(#st)" opacity="0.50"/>
<circle cx="431.8" cy="19.3" r="1.9" fill="url(#st)" opacity="0.62"/>
<circle cx="435.3" cy="10.9" r="1.7" fill="url(#st)" opacity="0.50"/>
<circle cx="457.0" cy="26.3" r="1.7" fill="url(#st)" opacity="0.50"/>
<circle cx="405.3" cy="113.0" r="1.7" fill="url(#st)" opacity="0.50"/>
<circle cx="537.3" cy="149.3" r="1.7" fill="url(#st)" opacity="0.50"/>
<circle cx="513.0" cy="15.1" r="1.7" fill="url(#st)" opacity="0.50"/>
<circle cx="512.3" cy="39.7" r="1.7" fill="url(#st)" opacity="0.50"/>
<circle cx="88.2" cy="220.5" r="2.8" fill="url(#st)" opacity="1.00"/>
<circle cx="93.3" cy="211.8" r="2.2" fill="url(#st)" opacity="0.78"/>
<circle cx="6.5" cy="219.1" r="2.2" fill="url(#st)" opacity="0.78"/>
<circle cx="125.4" cy="258.8" r="2.5" fill="url(#st)" opacity="0.90"/>
<circle cx="164.3" cy="249.3" r="2.2" fill="url(#st)" opacity="0.78"/>
<circle cx="159.5" cy="240.6" r="1.7" fill="url(#st)" opacity="0.50"/>
<circle cx="133.8" cy="303.6" r="2.2" fill="url(#st)" opacity="0.78"/>
<circle cx="112.0" cy="327.3" r="2.2" fill="url(#st)" opacity="0.78"/>
<circle cx="97.2" cy="332.1" r="2.2" fill="url(#st)" opacity="0.78"/>
<circle cx="181.1" cy="362.3" r="2.8" fill="url(#st)" opacity="1.00"/>
<circle cx="180.5" cy="354.5" r="2.2" fill="url(#st)" opacity="0.78"/>
<circle cx="103.0" cy="249.0" r="1.7" fill="url(#st)" opacity="0.50"/>
<circle cx="109.2" cy="249.0" r="1.7" fill="url(#st)" opacity="0.50"/>
<circle cx="140.0" cy="224.7" r="1.7" fill="url(#st)" opacity="0.50"/>
<circle cx="166.0" cy="268.6" r="1.7" fill="url(#st)" opacity="0.50"/>
<circle cx="174.1" cy="288.2" r="1.7" fill="url(#st)" opacity="0.50"/>
<circle cx="25.3" cy="303.3" r="1.7" fill="url(#st)" opacity="0.50"/>
<circle cx="105.0" cy="359.3" r="1.7" fill="url(#st)" opacity="0.50"/>
<circle cx="180.3" cy="188.3" r="1.7" fill="url(#st)" opacity="0.50"/>
<circle cx="173.0" cy="204.3" r="1.7" fill="url(#st)" opacity="0.50"/>
<circle cx="133.0" cy="209.9" r="1.7" fill="url(#st)" opacity="0.50"/>
<circle cx="148.3" cy="260.3" r="1.7" fill="url(#st)" opacity="0.50"/>
<circle cx="374.7" cy="270.8" r="2.5" fill="url(#st)" opacity="0.90"/>
<circle cx="231.5" cy="289.0" r="2.2" fill="url(#st)" opacity="0.78"/>
<circle cx="366.9" cy="310.6" r="1.7" fill="url(#st)" opacity="0.50"/>
<circle cx="349.3" cy="356.3" r="1.7" fill="url(#st)" opacity="0.50"/>
<circle cx="490.6" cy="188.3" r="2.8" fill="url(#st)" opacity="1.00"/>
<circle cx="499.5" cy="193.6" r="1.9" fill="url(#st)" opacity="0.62"/>
<circle cx="449.2" cy="209.9" r="2.5" fill="url(#st)" opacity="0.90"/>
<circle cx="436.0" cy="249.0" r="2.5" fill="url(#st)" opacity="0.90"/>
<circle cx="464.6" cy="267.8" r="2.8" fill="url(#st)" opacity="1.00"/>
<circle cx="485.8" cy="265.8" r="2.8" fill="url(#st)" opacity="1.00"/>
<circle cx="424.0" cy="305.5" r="2.8" fill="url(#st)" opacity="1.00"/>
<circle cx="421.2" cy="311.1" r="1.7" fill="url(#st)" opacity="0.50"/>
<circle cx="496.7" cy="306.9" r="2.2" fill="url(#st)" opacity="0.78"/>
<circle cx="440.3" cy="224.7" r="1.7" fill="url(#st)" opacity="0.50"/>
<circle cx="493.3" cy="221.9" r="1.7" fill="url(#st)" opacity="0.50"/>
<circle cx="400.5" cy="254.6" r="1.7" fill="url(#st)" opacity="0.50"/>
<circle cx="389.9" cy="188.9" r="1.7" fill="url(#st)" opacity="0.50"/>
<circle cx="413.7" cy="352.0" r="1.7" fill="url(#st)" opacity="0.50"/>
<circle cx="506.8" cy="295.3" r="1.7" fill="url(#st)" opacity="0.50"/>
<circle cx="382.9" cy="337.3" r="1.7" fill="url(#st)" opacity="0.50"/>
<circle cx="485.0" cy="349.7" r="1.7" fill="url(#st)" opacity="0.50"/>
<circle cx="310.8" cy="222.8" r="2.3" fill="url(#st)" opacity="0.82"/>
<circle cx="332.3" cy="239.3" r="2.2" fill="url(#st)" opacity="0.78"/>
<circle cx="338.3" cy="187.3" r="2.0" fill="url(#st)" opacity="0.70"/>
<circle cx="274.3" cy="130.3" r="2.2" fill="url(#st)" opacity="0.78"/>
<circle cx="247.3" cy="142.3" r="1.9" fill="url(#st)" opacity="0.62"/>
<circle cx="393.3" cy="139.3" r="1.7" fill="url(#st)" opacity="0.50"/>
<circle cx="334.3" cy="208.3" r="2.0" fill="url(#st)" opacity="0.70"/>
</g></svg>
<svg class="a" style="left:694px;top:231px" width="52" height="182" viewBox="0 0 52 182">
<defs><radialGradient id="bl" cx=".42" cy=".45"><stop offset="0" stop-color="#8cc6e6"/><stop offset=".6" stop-color="#6fb0dc"/><stop offset="1" stop-color="#8cb4d8"/></radialGradient>
<filter id="sb"><feGaussianBlur stdDeviation=".5"/></filter></defs>
<rect x="4.2" y="5.2" width="42.2" height="172" rx="21.1" fill="#ebebea" fill-opacity=".7"/>
<g filter="url(#sb)">
<circle cx="25.3" cy="26.2" r="20" fill="url(#bl)" fill-opacity=".82"/>
<rect x="14.2" y="16" width="20" height="15" fill="#eef0f2" fill-opacity=".78" stroke="#c8444a" stroke-width="1.3"/>
<path d="M28.5 26 l6.5 5 l-2.600 .3 l1.700 3.200 l-1.500 .7 l-1.700 -3.200 l-2 1.700z" fill="#aab2bc" stroke="#6a7280" stroke-width=".5"/>
<path d="M26 54.6 C26 67.0 29.2 70.2 43 70.2 C29.2 70.2 26 73.4 26 85.8 C26 73.4 22.8 70.2 9 70.2 C22.8 70.2 26 67.0 26 54.6Z" fill="#d63a3a" stroke="#d63a3a" stroke-width="1.4" stroke-linejoin="round"/>
<path d="M12 103.500 l5.200 2.200 l2.800 -4.600 l1.800 5 l5.400 -.6 l-2.600 3.800 q10.500 4.500 15.500 12.500 q-.8 3.200 -4.800 2.200 q-8.500 -3 -14.600 -10.500 l-3 3.400 l-1.200 -5 l-5.800 -1.400 l4 -3.400z" fill="#3cb044"/>
<g transform="rotate(-7 26 155.700)" opacity=".8"><rect x="13.500" y="143" width="25.500" height="25.500" rx="1.500" fill="#9c9c9c" stroke="#8a8a8a" stroke-width="1"/><rect x="17" y="143.500" width="17.500" height="13" fill="#c0c0c0"/><rect x="14" y="158" width="13" height="10" fill="#747474"/><rect x="27" y="160" width="9" height="8" fill="#8c8c8c"/></g>
</g>
</svg>
<div class="a" style="left:145px;top:408.5px;width:605px;height:7.5px;background:#f2f2fa"></div>
<div class="a" style="left:150px;top:415px;width:593.5px;height:13.6px;background:linear-gradient(90deg,#d4e9fb 0,#c6e0fa 30%,#9cc7f6 65%,#7db3f0 100%)"></div>
<div class="a" style="left:145px;top:428px;width:605px;height:6px;background:#f1f3fb"></div>
<div class="a" style="left:153px;top:434px;width:591px;height:209px;background:#fff;border:1px solid #b0b4bc;border-bottom:none"></div>
<div class="a" style="left:222px;top:541.25px;width:505px;height:13.6px;background:#e8e8ed"></div>
<div class="a" style="left:154px;top:453.7px;width:573px;height:1px;background:#e4e8ee"></div>
<div class="a" style="left:229px;top:437px;width:1px;height:15px;background:#dfe3ea"></div>
<div class="a" style="left:405.8px;top:437px;width:1px;height:15px;background:#dfe3ea"></div>
<div class="a" style="left:531.8px;top:437px;width:1px;height:15px;background:#dfe3ea"></div>
<div class="a" style="left:588.8px;top:437px;width:1px;height:15px;background:#dfe3ea"></div>
<div class="a" style="left:641.7px;top:437px;width:1px;height:15px;background:#dfe3ea"></div>
<div class="a" style="left:695px;top:437px;width:1px;height:15px;background:#dfe3ea"></div>
<div class="a" style="left:727px;top:435px;width:16px;height:191px;background:#f1f3f8;border-left:1px solid #e3e6ee"></div>
<div class="a" style="left:728px;top:437px;width:14px;height:13px;background:linear-gradient(90deg,#eef3fb,#e2ebf8);border:1px solid #c6d2e6;border-radius:2px"></div>
<div class="a" style="left:728px;top:450px;width:14px;height:65px;background:linear-gradient(90deg,#e6effb,#cddef5);border:1px solid #a4b6d2;border-radius:2px"></div>
<div class="a" style="left:728px;top:613px;width:14px;height:13px;background:linear-gradient(90deg,#eef3fb,#e2ebf8);border:1px solid #c6d2e6;border-radius:2px"></div>
<svg class="a" style="left:728px;top:437px" width="14" height="190" viewBox="0 0 14 190"><path d="M3.8 8.5 L7 5 L10.2 8.5" fill="none" stroke="#34425c" stroke-width="2"/><path d="M3.8 180.5 L7 184 L10.2 180.5" fill="none" stroke="#34425c" stroke-width="2"/><path d="M4.5 44.5h5M4.5 46.5h5M4.5 48.5h5" stroke="#8fa6c8" stroke-width=".8"/></svg>
<div class="a" style="left:154px;top:627px;width:573px;height:15.5px;background:linear-gradient(180deg,#eef2fa,#f7f9fd)"></div>
<div class="a" style="left:155px;top:627.6px;width:15px;height:14.2px;background:linear-gradient(180deg,#eaf1fc,#d3e1f7);border:1px solid #b4c4de;border-radius:2px"></div>
<div class="a" style="left:170.5px;top:627.6px;width:205px;height:14.2px;background:linear-gradient(180deg,#e2ecfb,#c6d9f5);border:1px solid #aabcd8;border-radius:2px"></div>
<div class="a" style="left:711px;top:627.6px;width:14.5px;height:14.2px;background:linear-gradient(180deg,#eaf1fc,#d3e1f7);border:1px solid #b4c4de;border-radius:2px"></div>
<svg class="a" style="left:154px;top:627.7px" width="573" height="14" viewBox="0 0 573 14"><path d="M10 3.5 L6.300 7 L10 10.500" fill="none" stroke="#3c4a64" stroke-width="2"/><path d="M562.500 3.500 L566.200 7 L562.500 10.500" fill="none" stroke="#3c4a64" stroke-width="2"/><path d="M116 4.5v5M118 4.5v5M120 4.5v5" stroke="#94a9ca" stroke-width=".8"/></svg>
<div class="a" style="left:727px;top:627px;width:16px;height:15.5px;background:#eef0f6"></div>
<div class="a" style="left:153px;top:643px;width:597px;height:18px;background:#eeeeef"></div>
<svg class="a" style="left:0;top:636px" width="750" height="25" viewBox="0 636 750 25"><path d="M152.500 642.300 L158 656.700 L214 656.700 L224 643.400 L224 642 Z" fill="#fff"/><path d="M224 643.400 L744 643.400" stroke="#4e5056" stroke-width="1.500"/><path d="M152.300 642 L158 656.700 L214 656.700 L224.300 643" fill="none" stroke="#3c3c40" stroke-width="1.200"/><path d="M217.300 650.500 L220.500 656.700 L259.500 656.700 L268 643.400" fill="none" stroke="#505056" stroke-width="1"/></svg>
<div class="cb" style="top:458.00px"><svg width="11" height="11" viewBox="0 0 11 11"><path d="M2.8 5.6 L4.6 7.6 L8.2 3.2" fill="none" stroke="#38ae3e" stroke-width="1.6" stroke-linecap="round" stroke-linejoin="round"/></svg></div>
<div class="th lt" style="top:455.60px"></div>
<svg class="a" style="left:211.2px;top:457.90px" width="11.4" height="11.4" viewBox="0 0 11.4 11.4"><rect width="11.4" height="11.4" fill="#e8f0e8"/><rect width="5.3" height="5.3" fill="#30c040"/><rect x="6.1" width="5.3" height="5.3" fill="#e02830"/><rect y="6.1" width="5.3" height="5.3" fill="#2868e0"/><rect x="6.1" y="6.1" width="5.3" height="5.3" fill="#28c038"/></svg>
<div class="cb" style="top:474.87px"><svg width="11" height="11" viewBox="0 0 11 11"><path d="M2.8 5.6 L4.6 7.6 L8.2 3.2" fill="none" stroke="#38ae3e" stroke-width="1.6" stroke-linecap="round" stroke-linejoin="round"/></svg></div>
<div class="th lt" style="top:472.47px"></div>
<svg class="a" style="left:211.2px;top:474.77px" width="11.4" height="11.4" viewBox="0 0 11.4 11.4"><rect width="11.4" height="11.4" fill="#e8f0e8"/><rect width="5.3" height="5.3" fill="#30c040"/><rect x="6.1" width="5.3" height="5.3" fill="#e02830"/><rect y="6.1" width="5.3" height="5.3" fill="#2868e0"/><rect x="6.1" y="6.1" width="5.3" height="5.3" fill="#28c038"/></svg>
<div class="cb" style="top:491.74px"><svg width="11" height="11" viewBox="0 0 11 11"><path d="M2.8 5.6 L4.6 7.6 L8.2 3.2" fill="none" stroke="#38ae3e" stroke-width="1.6" stroke-linecap="round" stroke-linejoin="round"/></svg></div>
<div class="th lt" style="top:489.34px"></div>
<svg class="a" style="left:211.2px;top:491.64px" width="11.4" height="11.4" viewBox="0 0 11.4 11.4"><rect width="11.4" height="11.4" fill="#e8f0e8"/><rect width="5.3" height="5.3" fill="#30c040"/><rect x="6.1" width="5.3" height="5.3" fill="#e02830"/><rect y="6.1" width="5.3" height="5.3" fill="#2868e0"/><rect x="6.1" y="6.1" width="5.3" height="5.3" fill="#28c038"/></svg>
<div class="cb" style="top:508.61px"><svg width="11" height="11" viewBox="0 0 11 11"><path d="M2.8 5.6 L4.6 7.6 L8.2 3.2" fill="none" stroke="#38ae3e" stroke-width="1.6" stroke-linecap="round" stroke-linejoin="round"/></svg></div>
<div class="th lt" style="top:506.21px"></div>
<svg class="a" style="left:211.2px;top:508.51px" width="11.4" height="11.4" viewBox="0 0 11.4 11.4"><rect width="11.4" height="11.4" fill="#e8f0e8"/><rect width="5.3" height="5.3" fill="#30c040"/><rect x="6.1" width="5.3" height="5.3" fill="#e02830"/><rect y="6.1" width="5.3" height="5.3" fill="#2868e0"/><rect x="6.1" y="6.1" width="5.3" height="5.3" fill="#28c038"/></svg>
<div class="cb" style="top:525.48px"><svg width="11" height="11" viewBox="0 0 11 11"><path d="M2.8 5.6 L4.6 7.6 L8.2 3.2" fill="none" stroke="#38ae3e" stroke-width="1.6" stroke-linecap="round" stroke-linejoin="round"/></svg></div>
<div class="th lt" style="top:523.08px"></div>
<svg class="a" style="left:211.2px;top:525.38px" width="11.4" height="11.4" viewBox="0 0 11.4 11.4"><rect width="11.4" height="11.4" fill="#e8f0e8"/><rect width="5.3" height="5.3" fill="#30c040"/><rect x="6.1" width="5.3" height="5.3" fill="#e02830"/><rect y="6.1" width="5.3" height="5.3" fill="#2868e0"/><rect x="6.1" y="6.1" width="5.3" height="5.3" fill="#28c038"/></svg>
<div class="cb" style="top:542.35px"><svg width="11" height="11" viewBox="0 0 11 11"><path d="M2.8 5.6 L4.6 7.6 L8.2 3.2" fill="none" stroke="#38ae3e" stroke-width="1.6" stroke-linecap="round" stroke-linejoin="round"/></svg></div>
<div class="th lt" style="top:539.95px"></div>
<svg class="a" style="left:211.2px;top:542.25px" width="11.4" height="11.4" viewBox="0 0 11.4 11.4"><rect width="11.4" height="11.4" fill="#e8f0e8"/><rect width="5.3" height="5.3" fill="#30c040"/><rect x="6.1" width="5.3" height="5.3" fill="#e02830"/><rect y="6.1" width="5.3" height="5.3" fill="#2868e0"/><rect x="6.1" y="6.1" width="5.3" height="5.3" fill="#28c038"/></svg>
<div class="cb" style="top:559.22px"><svg width="11" height="11" viewBox="0 0 11 11"><path d="M2.8 5.6 L4.6 7.6 L8.2 3.2" fill="none" stroke="#38ae3e" stroke-width="1.6" stroke-linecap="round" stroke-linejoin="round"/></svg></div>
<div class="th dk" style="top:556.82px"></div>
<svg class="a" style="left:211.2px;top:559.12px" width="11.4" height="11.4" viewBox="0 0 11.4 11.4"><rect width="11.4" height="11.4" fill="#e8f0e8"/><rect width="5.3" height="5.3" fill="#30c040"/><rect x="6.1" width="5.3" height="5.3" fill="#e02830"/><rect y="6.1" width="5.3" height="5.3" fill="#2868e0"/><rect x="6.1" y="6.1" width="5.3" height="5.3" fill="#28c038"/></svg>
<div class="cb" style="top:576.09px"><svg width="11" height="11" viewBox="0 0 11 11"><path d="M2.8 5.6 L4.6 7.6 L8.2 3.2" fill="none" stroke="#38ae3e" stroke-width="1.6" stroke-linecap="round" stroke-linejoin="round"/></svg></div>
<div class="th dk" style="top:573.69px"></div>
<svg class="a" style="left:211.2px;top:575.99px" width="11.4" height="11.4" viewBox="0 0 11.4 11.4"><rect width="11.4" height="11.4" fill="#e8f0e8"/><rect width="5.3" height="5.3" fill="#30c040"/><rect x="6.1" width="5.3" height="5.3" fill="#e02830"/><rect y="6.1" width="5.3" height="5.3" fill="#2868e0"/><rect x="6.1" y="6.1" width="5.3" height="5.3" fill="#28c038"/></svg>
<div class="cb" style="top:592.96px"><svg width="11" height="11" viewBox="0 0 11 11"><path d="M2.8 5.6 L4.6 7.6 L8.2 3.2" fill="none" stroke="#38ae3e" stroke-width="1.6" stroke-linecap="round" stroke-linejoin="round"/></svg></div>
<div class="th dk" style="top:590.56px"></div>
<svg class="a" style="left:211.2px;top:592.86px" width="11.4" height="11.4" viewBox="0 0 11.4 11.4"><rect width="11.4" height="11.4" fill="#e8f0e8"/><rect width="5.3" height="5.3" fill="#30c040"/><rect x="6.1" width="5.3" height="5.3" fill="#e02830"/><rect y="6.1" width="5.3" height="5.3" fill="#2868e0"/><rect x="6.1" y="6.1" width="5.3" height="5.3" fill="#28c038"/></svg>
<div class="cb" style="top:609.83px"><svg width="11" height="11" viewBox="0 0 11 11"><path d="M2.8 5.6 L4.6 7.6 L8.2 3.2" fill="none" stroke="#38ae3e" stroke-width="1.6" stroke-linecap="round" stroke-linejoin="round"/></svg></div>
<div class="th dk" style="top:607.43px"></div>
<svg class="a" style="left:211.2px;top:609.73px" width="11.4" height="11.4" viewBox="0 0 11.4 11.4"><rect width="11.4" height="11.4" fill="#e8f0e8"/><rect width="5.3" height="5.3" fill="#30c040"/><rect x="6.1" width="5.3" height="5.3" fill="#e02830"/><rect y="6.1" width="5.3" height="5.3" fill="#2868e0"/><rect x="6.1" y="6.1" width="5.3" height="5.3" fill="#28c038"/></svg>
<span class="t" id="t0" style="top:12.50px;font-size:10.6px;color:#1c2430;font-weight:bold;right:664.00px;transform-origin:100% 50%;transform:scaleX(0.9675);">Registering and Stacking</span>
<span class="t" id="t1" style="top:36.50px;font-size:10.5px;color:#7a2c3c;right:697.70px;transform-origin:100% 50%;transform:scaleX(0.9742);">Open picture files...</span>
<span class="t" id="t2" style="top:53.00px;font-size:10.5px;color:#2c3440;right:708.20px;transform-origin:100% 50%;transform:scaleX(0.9302);">dark files...</span>
<span class="t" id="t3" style="top:69.30px;font-size:10.5px;color:#2c3440;right:712.50px;transform-origin:100% 50%;transform:scaleX(0.9588);">flat files...</span>
<span class="t" id="t4" style="top:86.00px;font-size:10.5px;color:#2c3440;right:692.00px;transform-origin:100% 50%;transform:scaleX(0.9376);">dark flat files...</span>
<span class="t" id="t5" style="top:102.60px;font-size:10.5px;color:#2c3440;right:681.30px;transform-origin:100% 50%;transform:scaleX(0.9517);">offset/bias files...</span>
<span class="t" id="t6" style="top:125.00px;font-size:10.5px;color:#2c3440;right:708.40px;transform-origin:100% 50%;transform:scaleX(0.8701);">Open a File List...</span>
<span class="t" id="t7" style="top:140.30px;font-size:10.5px;color:#2c3440;right:701.00px;transform-origin:100% 50%;transform:scaleX(0.9127);">Save the File List...</span>
<span class="t" id="t8" style="top:168.70px;font-size:10.5px;color:#2c3440;right:743.70px;transform-origin:100% 50%;transform:scaleX(0.9300);">Clear List</span>
<span class="t" id="t9" style="top:194.00px;font-size:10.5px;color:#2c3440;right:746.00px;transform-origin:100% 50%;transform:scaleX(0.9300);">Check all</span>
<span class="t" id="t10" style="top:212.40px;font-size:10.5px;color:#2c3440;right:667.00px;transform-origin:100% 50%;transform:scaleX(0.9608);">Check above a threshold...</span>
<span class="t" id="t11" style="top:232.50px;font-size:10.5px;color:#2c3440;right:735.50px;transform-origin:100% 50%;transform:scaleX(0.9300);">Uncheck all</span>
<span class="t" id="t12" style="top:260.90px;font-size:10.5px;color:#7a2c3c;right:663.60px;transform-origin:100% 50%;transform:scaleX(0.9195);">Register checked pictures...</span>
<span class="t" id="t13" style="top:287.00px;font-size:10.5px;color:#2c3440;right:702.00px;transform-origin:100% 50%;transform:scaleX(0.9948);">Compute offsets...</span>
<span class="t" id="t14" style="top:312.20px;font-size:10.5px;color:#7a2c3c;right:676.40px;transform-origin:100% 50%;transform:scaleX(0.8943);">Stack checked pictures...</span>
<span class="t" id="t15" style="top:329.70px;font-size:10.5px;color:#2c3440;right:711.20px;transform-origin:100% 50%;transform:scaleX(0.9231);">Batch stacking...</span>
<span class="t" id="t16" style="top:367.50px;font-size:10.6px;color:#1c1c1c;font-weight:bold;right:735.00px;transform-origin:100% 50%;transform:scaleX(0.9300);">Processing</span>
<span class="t" id="t17" style="top:388.00px;font-size:10.5px;color:#2c3440;right:702.70px;transform-origin:100% 50%;transform:scaleX(0.9765);">Open picture file...</span>
<span class="t" id="t18" style="top:407.00px;font-size:10.5px;color:#2c3440;right:643.40px;transform-origin:100% 50%;transform:scaleX(0.9414);">Copy current picture to clipboard</span>
<span class="t" id="t19" style="top:424.70px;font-size:10.5px;color:#2c3440;right:690.70px;transform-origin:100% 50%;transform:scaleX(0.9154);">Create a Star Mask...</span>
<span class="t" id="t20" style="top:442.90px;font-size:10.5px;color:#2c3440;right:692.40px;transform-origin:100% 50%;transform:scaleX(0.9583);">Save picture to file...</span>
<span class="t" id="t21" style="top:503.00px;font-size:10.5px;color:#2c3440;right:673.20px;transform-origin:100% 50%;transform:scaleX(0.8733);">Raw/FITS DDP Settings...</span>
<span class="t" id="t22" style="top:524.30px;font-size:10.5px;color:#2c3440;right:675.40px;transform-origin:100% 50%;transform:scaleX(0.9100);">About DeepSkyStacker...</span>
<span class="t" id="t23" style="top:546.00px;font-size:10.5px;color:#2c3440;right:675.80px;transform-origin:100% 50%;transform:scaleX(0.9118);">DeepSkyStacker's Help...</span>
<span class="t" id="t24" style="top:5.80px;font-size:10.4px;color:#2a3038;left:152.80px;transform-origin:0 50%;transform:scaleX(0.9146);">E:\Astro\Photos\Samples\M13 RAW\CRW_7981.CRW</span>
<span class="t" id="t25" style="top:414.80px;font-size:10.4px;color:#2c3440;left:152.40px;transform-origin:0 50%;transform:scaleX(0.8945);">Light Frames:6</span>
<span class="t" id="t26" style="top:414.80px;font-size:10.4px;color:#2c3440;left:232.50px;transform-origin:0 50%;transform:scaleX(0.9000);">-</span>
<span class="t" id="t27" style="top:414.80px;font-size:10.4px;color:#2c3440;left:250.80px;transform-origin:0 50%;transform:scaleX(0.9176);">Dark Frames: 13</span>
<span class="t" id="t28" style="top:414.80px;font-size:10.4px;color:#2c3440;left:339.50px;transform-origin:0 50%;transform:scaleX(0.9000);">-</span>
<span class="t" id="t29" style="top:414.80px;font-size:10.4px;color:#2c3440;left:357.00px;transform-origin:0 50%;transform:scaleX(0.9205);">Flat Frames:0</span>
<span class="t" id="t30" style="top:414.80px;font-size:10.4px;color:#2c3440;left:432.50px;transform-origin:0 50%;transform:scaleX(0.9000);">-</span>
<span class="t" id="t31" style="top:414.80px;font-size:10.4px;color:#2c3440;left:442.00px;transform-origin:0 50%;transform:scaleX(0.9149);">Dark Flat Frames: 0</span>
<span class="t" id="t32" style="top:414.80px;font-size:10.4px;color:#2c3440;left:535.00px;transform-origin:0 50%;transform:scaleX(0.9000);">-</span>
<span class="t" id="t33" style="top:414.80px;font-size:10.4px;color:#2c3440;left:553.70px;transform-origin:0 50%;transform:scaleX(0.9272);">Offset/Bias Frames: 6</span>
<span class="t" id="t34" style="top:439.30px;font-size:10.4px;color:#4c5056;left:235.00px;transform-origin:0 50%;transform:scaleX(0.9000);">File</span>
<span class="t" id="t35" style="top:439.30px;font-size:10.4px;color:#4c5056;left:412.80px;transform-origin:0 50%;transform:scaleX(0.9000);">Type</span>
<span class="t" id="t36" style="top:439.30px;font-size:10.4px;color:#4c5056;right:224.00px;transform-origin:100% 50%;transform:scaleX(0.9000);">Score</span>
<span class="t" id="t37" style="top:439.30px;font-size:10.4px;color:#4c5056;right:167.40px;transform-origin:100% 50%;transform:scaleX(0.9000);">#Stars</span>
<span class="t" id="t38" style="top:439.30px;font-size:10.4px;color:#4c5056;right:114.00px;transform-origin:100% 50%;transform:scaleX(0.9000);">dX</span>
<span class="t" id="t39" style="top:439.30px;font-size:10.4px;color:#4c5056;right:61.00px;transform-origin:100% 50%;transform:scaleX(0.9000);">dY</span>
<span class="t" id="t40" style="top:439.30px;font-size:10.4px;color:#4c5056;left:720.50px;transform-origin:0 50%;transform:scaleX(0.9000);">A</span>
<span class="t" id="t41" style="top:456.80px;font-size:10.4px;color:#5e6268;left:235.00px;transform-origin:0 50%;transform:scaleX(0.8945);">CRW_7968.CRW</span>
<span class="t" id="t42" style="top:456.80px;font-size:10.4px;color:#5e6268;left:412.80px;transform-origin:0 50%;transform:scaleX(0.9000);">Light</span>
<span class="t" id="t43" style="top:456.80px;font-size:10.4px;color:#5e6268;right:224.00px;transform-origin:100% 50%;transform:scaleX(0.9000);">1494.79</span>
<span class="t" id="t44" style="top:456.80px;font-size:10.4px;color:#5e6268;right:167.40px;transform-origin:100% 50%;transform:scaleX(0.9000);">220</span>
<span class="t" id="t45" style="top:456.80px;font-size:10.4px;color:#5e6268;right:114.00px;transform-origin:100% 50%;transform:scaleX(0.9000);">NC</span>
<span class="t" id="t46" style="top:456.80px;font-size:10.4px;color:#5e6268;right:61.00px;transform-origin:100% 50%;transform:scaleX(0.9000);">NC</span>
<span class="t" id="t47" style="top:473.67px;font-size:10.4px;color:#5e6268;left:235.00px;transform-origin:0 50%;transform:scaleX(0.8945);">CRW_7972.CRW</span>
<span class="t" id="t48" style="top:473.67px;font-size:10.4px;color:#5e6268;left:412.80px;transform-origin:0 50%;transform:scaleX(0.9000);">Light</span>
<span class="t" id="t49" style="top:473.67px;font-size:10.4px;color:#5e6268;right:224.00px;transform-origin:100% 50%;transform:scaleX(0.9000);">1540.79</span>
<span class="t" id="t50" style="top:473.67px;font-size:10.4px;color:#5e6268;right:167.40px;transform-origin:100% 50%;transform:scaleX(0.9000);">227</span>
<span class="t" id="t51" style="top:473.67px;font-size:10.4px;color:#5e6268;right:114.00px;transform-origin:100% 50%;transform:scaleX(0.9000);">NC</span>
<span class="t" id="t52" style="top:473.67px;font-size:10.4px;color:#5e6268;right:61.00px;transform-origin:100% 50%;transform:scaleX(0.9000);">NC</span>
<span class="t" id="t53" style="top:490.54px;font-size:10.4px;color:#5e6268;left:235.00px;transform-origin:0 50%;transform:scaleX(0.8945);">CRW_7976.CRW</span>
<span class="t" id="t54" style="top:490.54px;font-size:10.4px;color:#5e6268;left:412.80px;transform-origin:0 50%;transform:scaleX(0.9000);">Light</span>
<span class="t" id="t55" style="top:490.54px;font-size:10.4px;color:#5e6268;right:224.00px;transform-origin:100% 50%;transform:scaleX(0.9000);">1066.60</span>
<span class="t" id="t56" style="top:490.54px;font-size:10.4px;color:#5e6268;right:167.40px;transform-origin:100% 50%;transform:scaleX(0.9000);">165</span>
<span class="t" id="t57" style="top:490.54px;font-size:10.4px;color:#5e6268;right:114.00px;transform-origin:100% 50%;transform:scaleX(0.9000);">NC</span>
<span class="t" id="t58" style="top:490.54px;font-size:10.4px;color:#5e6268;right:61.00px;transform-origin:100% 50%;transform:scaleX(0.9000);">NC</span>
<span class="t" id="t59" style="top:507.41px;font-size:10.4px;color:#5e6268;left:235.00px;transform-origin:0 50%;transform:scaleX(0.8945);">CRW_7977.CRW</span>
<span class="t" id="t60" style="top:507.41px;font-size:10.4px;color:#5e6268;left:412.80px;transform-origin:0 50%;transform:scaleX(0.9000);">Light</span>
<span class="t" id="t61" style="top:507.41px;font-size:10.4px;color:#5e6268;right:224.00px;transform-origin:100% 50%;transform:scaleX(0.9000);">1348.64</span>
<span class="t" id="t62" style="top:507.41px;font-size:10.4px;color:#5e6268;right:167.40px;transform-origin:100% 50%;transform:scaleX(0.9000);">197</span>
<span class="t" id="t63" style="top:507.41px;font-size:10.4px;color:#5e6268;right:114.00px;transform-origin:100% 50%;transform:scaleX(0.9000);">NC</span>
<span class="t" id="t64" style="top:507.41px;font-size:10.4px;color:#5e6268;right:61.00px;transform-origin:100% 50%;transform:scaleX(0.9000);">NC</span>
<span class="t" id="t65" style="top:524.28px;font-size:10.4px;color:#5e6268;left:235.00px;transform-origin:0 50%;transform:scaleX(0.8945);">CRW_7978.CRW</span>
<span class="t" id="t66" style="top:524.28px;font-size:10.4px;color:#5e6268;left:412.80px;transform-origin:0 50%;transform:scaleX(0.9000);">Light</span>
<span class="t" id="t67" style="top:524.28px;font-size:10.4px;color:#5e6268;right:224.00px;transform-origin:100% 50%;transform:scaleX(0.9000);">1116.59</span>
<span class="t" id="t68" style="top:524.28px;font-size:10.4px;color:#5e6268;right:167.40px;transform-origin:100% 50%;transform:scaleX(0.9000);">166</span>
<span class="t" id="t69" style="top:524.28px;font-size:10.4px;color:#5e6268;right:114.00px;transform-origin:100% 50%;transform:scaleX(0.9000);">NC</span>
<span class="t" id="t70" style="top:524.28px;font-size:10.4px;color:#5e6268;right:61.00px;transform-origin:100% 50%;transform:scaleX(0.9000);">NC</span>
<span class="t" id="t71" style="top:541.15px;font-size:10.4px;color:#34363c;left:235.00px;transform-origin:0 50%;transform:scaleX(0.8945);">CRW_7981.CRW</span>
<span class="t" id="t72" style="top:541.15px;font-size:10.4px;color:#34363c;left:412.80px;transform-origin:0 50%;transform:scaleX(0.9000);">Light</span>
<span class="t" id="t73" style="top:541.15px;font-size:10.4px;color:#34363c;right:224.00px;transform-origin:100% 50%;transform:scaleX(0.9000);">1963.77</span>
<span class="t" id="t74" style="top:541.15px;font-size:10.4px;color:#34363c;right:167.40px;transform-origin:100% 50%;transform:scaleX(0.9000);">285</span>
<span class="t" id="t75" style="top:541.15px;font-size:10.4px;color:#34363c;right:114.00px;transform-origin:100% 50%;transform:scaleX(0.9000);">NC</span>
<span class="t" id="t76" style="top:541.15px;font-size:10.4px;color:#34363c;right:61.00px;transform-origin:100% 50%;transform:scaleX(0.9000);">NC</span>
<span class="t" id="t77" style="top:558.02px;font-size:10.4px;color:#5e6268;left:235.00px;transform-origin:0 50%;transform:scaleX(0.8945);">CRW_7982.CRW</span>
<span class="t" id="t78" style="top:558.02px;font-size:10.4px;color:#5e6268;left:412.80px;transform-origin:0 50%;transform:scaleX(0.9000);">Dark</span>
<span class="t" id="t79" style="top:558.02px;font-size:10.4px;color:#5e6268;right:224.00px;transform-origin:100% 50%;transform:scaleX(0.9000);">N/A</span>
<span class="t" id="t80" style="top:558.02px;font-size:10.4px;color:#5e6268;right:167.40px;transform-origin:100% 50%;transform:scaleX(0.9000);">N/A</span>
<span class="t" id="t81" style="top:558.02px;font-size:10.4px;color:#5e6268;right:114.00px;transform-origin:100% 50%;transform:scaleX(0.9000);">N/A</span>
<span class="t" id="t82" style="top:558.02px;font-size:10.4px;color:#5e6268;right:61.00px;transform-origin:100% 50%;transform:scaleX(0.9000);">N/A</span>
<span class="t" id="t83" style="top:574.89px;font-size:10.4px;color:#5e6268;left:235.00px;transform-origin:0 50%;transform:scaleX(0.8945);">CRW_7984.CRW</span>
<span class="t" id="t84" style="top:574.89px;font-size:10.4px;color:#5e6268;left:412.80px;transform-origin:0 50%;transform:scaleX(0.9000);">Dark</span>
<span class="t" id="t85" style="top:574.89px;font-size:10.4px;color:#5e6268;right:224.00px;transform-origin:100% 50%;transform:scaleX(0.9000);">N/A</span>
<span class="t" id="t86" style="top:574.89px;font-size:10.4px;color:#5e6268;right:167.40px;transform-origin:100% 50%;transform:scaleX(0.9000);">N/A</span>
<span class="t" id="t87" style="top:574.89px;font-size:10.4px;color:#5e6268;right:114.00px;transform-origin:100% 50%;transform:scaleX(0.9000);">N/A</span>
<span class="t" id="t88" style="top:574.89px;font-size:10.4px;color:#5e6268;right:61.00px;transform-origin:100% 50%;transform:scaleX(0.9000);">N/A</span>
<span class="t" id="t89" style="top:591.76px;font-size:10.4px;color:#5e6268;left:235.00px;transform-origin:0 50%;transform:scaleX(0.8945);">CRW_7986.CRW</span>
<span class="t" id="t90" style="top:591.76px;font-size:10.4px;color:#5e6268;left:412.80px;transform-origin:0 50%;transform:scaleX(0.9000);">Dark</span>
<span class="t" id="t91" style="top:591.76px;font-size:10.4px;color:#5e6268;right:224.00px;transform-origin:100% 50%;transform:scaleX(0.9000);">N/A</span>
<span class="t" id="t92" style="top:591.76px;font-size:10.4px;color:#5e6268;right:167.40px;transform-origin:100% 50%;transform:scaleX(0.9000);">N/A</span>
<span class="t" id="t93" style="top:591.76px;font-size:10.4px;color:#5e6268;right:114.00px;transform-origin:100% 50%;transform:scaleX(0.9000);">N/A</span>
<span class="t" id="t94" style="top:591.76px;font-size:10.4px;color:#5e6268;right:61.00px;transform-origin:100% 50%;transform:scaleX(0.9000);">N/A</span>
<span class="t" id="t95" style="top:608.63px;font-size:10.4px;color:#5e6268;left:235.00px;transform-origin:0 50%;transform:scaleX(0.8945);">CRW_7987.CRW</span>
<span class="t" id="t96" style="top:608.63px;font-size:10.4px;color:#5e6268;left:412.80px;transform-origin:0 50%;transform:scaleX(0.9000);">Dark</span>
<span class="t" id="t97" style="top:608.63px;font-size:10.4px;color:#5e6268;right:224.00px;transform-origin:100% 50%;transform:scaleX(0.9000);">N/A</span>
<span class="t" id="t98" style="top:608.63px;font-size:10.4px;color:#5e6268;right:167.40px;transform-origin:100% 50%;transform:scaleX(0.9000);">N/A</span>
<span class="t" id="t99" style="top:608.63px;font-size:10.4px;color:#5e6268;right:114.00px;transform-origin:100% 50%;transform:scaleX(0.9000);">N/A</span>
<span class="t" id="t100" style="top:608.63px;font-size:10.4px;color:#5e6268;right:61.00px;transform-origin:100% 50%;transform:scaleX(0.9000);">N/A</span>
<span class="t" id="t101" style="top:643.40px;font-size:8.8px;color:#181818;font-weight:bold;left:162.40px;transform-origin:0 50%;transform:scaleX(1.0230);">Main Group</span>
<span class="t" id="t102" style="top:643.40px;font-size:8.2px;color:#555;left:226.80px;transform-origin:0 50%;transform:scaleX(0.9293);">Group 1</span>
</body></html>
